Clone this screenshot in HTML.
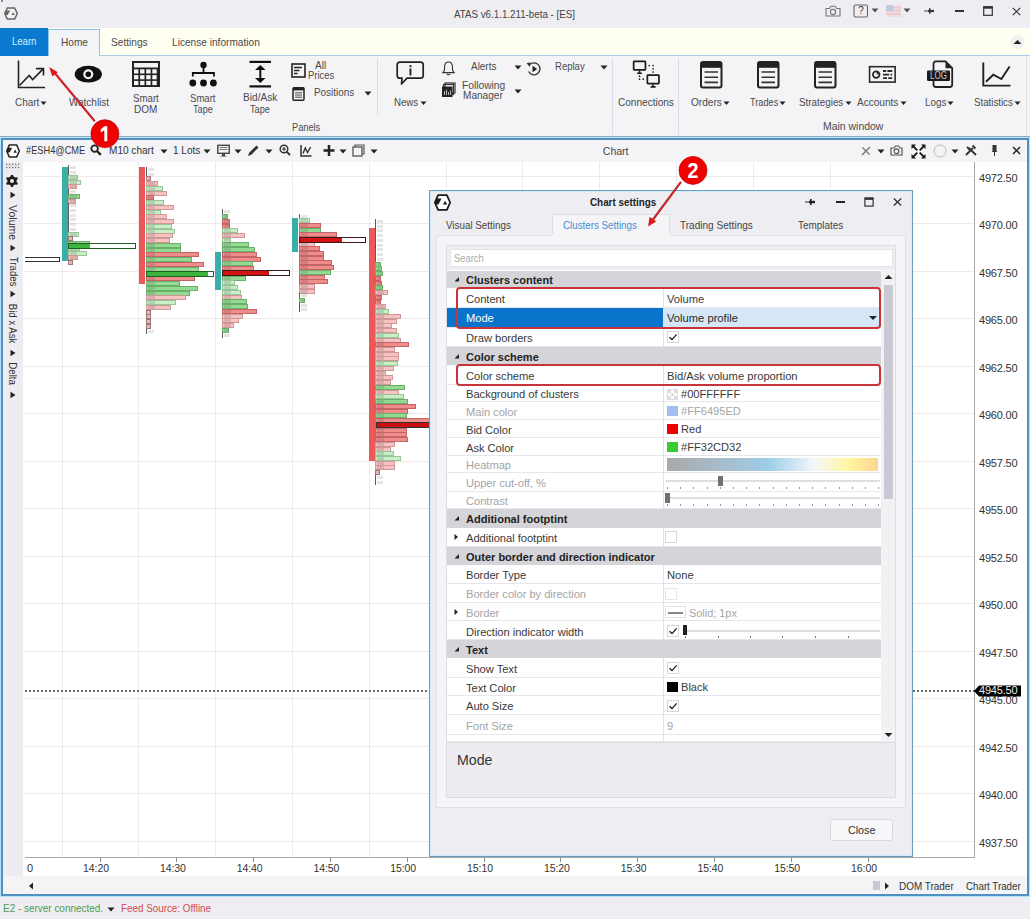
<!DOCTYPE html><html><head><meta charset="utf-8"><style>
html,body{margin:0;padding:0;width:1030px;height:919px;overflow:hidden;background:#EEEEF2;font-family:"Liberation Sans",sans-serif;color:#333;}
.t{position:absolute;white-space:nowrap;}
div,svg{box-sizing:border-box;}
</style></head><body>
<div style="position:absolute;left:0px;top:0px;width:1030px;height:28px;background:#EEEEF2"></div>
<div style="position:absolute;left:0px;top:28px;width:1030px;height:27px;background:#FFFFF2"></div>
<div style="position:absolute;left:0px;top:55px;width:1030px;height:1px;background:#A9CDE8"></div>
<div style="position:absolute;left:0px;top:56px;width:1030px;height:80px;background:#F4F4F7"></div>
<div style="position:absolute;left:1026px;top:56px;width:1px;height:80px;background:#E2E2E8"></div>
<div style="position:absolute;left:0px;top:136px;width:1030px;height:1px;background:#8FAABB"></div>
<div style="position:absolute;left:0px;top:137px;width:1030px;height:760px;background:#B5E2FA"></div>
<div style="position:absolute;left:1px;top:138px;width:1028px;height:758px;border:2px solid #4F91C2;background:#E6F6FE"></div>
<div style="position:absolute;left:3px;top:140px;width:1024px;height:754px;background:#F4F4F7"></div>
<div style="position:absolute;left:23px;top:162px;width:1004px;height:714px;background:#FFFFFF"></div>
<div style="position:absolute;left:0px;top:897px;width:1030px;height:22px;background:#EEEEF2"></div>
<div style="position:absolute;left:25px;top:176px;width:950px;height:1px;background:#F0E9EA"></div>
<div style="position:absolute;left:25px;top:223px;width:950px;height:1px;background:#F0E9EA"></div>
<div style="position:absolute;left:25px;top:271px;width:950px;height:1px;background:#F0E9EA"></div>
<div style="position:absolute;left:25px;top:318px;width:950px;height:1px;background:#F0E9EA"></div>
<div style="position:absolute;left:25px;top:366px;width:950px;height:1px;background:#F0E9EA"></div>
<div style="position:absolute;left:25px;top:413px;width:950px;height:1px;background:#F0E9EA"></div>
<div style="position:absolute;left:25px;top:461px;width:950px;height:1px;background:#F0E9EA"></div>
<div style="position:absolute;left:25px;top:508px;width:950px;height:1px;background:#F0E9EA"></div>
<div style="position:absolute;left:25px;top:556px;width:950px;height:1px;background:#F0E9EA"></div>
<div style="position:absolute;left:25px;top:603px;width:950px;height:1px;background:#F0E9EA"></div>
<div style="position:absolute;left:25px;top:651px;width:950px;height:1px;background:#F0E9EA"></div>
<div style="position:absolute;left:25px;top:698px;width:950px;height:1px;background:#F0E9EA"></div>
<div style="position:absolute;left:25px;top:746px;width:950px;height:1px;background:#F0E9EA"></div>
<div style="position:absolute;left:25px;top:793px;width:950px;height:1px;background:#F0E9EA"></div>
<div style="position:absolute;left:25px;top:841px;width:950px;height:1px;background:#F0E9EA"></div>
<div style="position:absolute;left:62px;top:162px;width:1px;height:696px;background:#F0E9EA"></div>
<div style="position:absolute;left:138px;top:162px;width:1px;height:696px;background:#F0E9EA"></div>
<div style="position:absolute;left:215px;top:162px;width:1px;height:696px;background:#F0E9EA"></div>
<div style="position:absolute;left:292px;top:162px;width:1px;height:696px;background:#F0E9EA"></div>
<div style="position:absolute;left:369px;top:162px;width:1px;height:696px;background:#F0E9EA"></div>
<div style="position:absolute;left:446px;top:162px;width:1px;height:696px;background:#F0E9EA"></div>
<div style="position:absolute;left:522px;top:162px;width:1px;height:696px;background:#F0E9EA"></div>
<div style="position:absolute;left:599px;top:162px;width:1px;height:696px;background:#F0E9EA"></div>
<div style="position:absolute;left:676px;top:162px;width:1px;height:696px;background:#F0E9EA"></div>
<div style="position:absolute;left:753px;top:162px;width:1px;height:696px;background:#F0E9EA"></div>
<div style="position:absolute;left:830px;top:162px;width:1px;height:696px;background:#F0E9EA"></div>
<div style="position:absolute;left:974px;top:162px;width:1px;height:696px;background:#A8A8A8"></div>
<div style="position:absolute;left:25px;top:857px;width:950px;height:1px;background:#A8A8A8"></div>
<div class="t" style="left:979px;top:171.6px;font-size:11px;line-height:13.2px;color:#333;letter-spacing:-0.2px">4972.50</div>
<div class="t" style="left:979px;top:219.12px;font-size:11px;line-height:13.2px;color:#333;letter-spacing:-0.2px">4970.00</div>
<div class="t" style="left:979px;top:266.64px;font-size:11px;line-height:13.2px;color:#333;letter-spacing:-0.2px">4967.50</div>
<div class="t" style="left:979px;top:314.15999999999997px;font-size:11px;line-height:13.2px;color:#333;letter-spacing:-0.2px">4965.00</div>
<div class="t" style="left:979px;top:361.67999999999995px;font-size:11px;line-height:13.2px;color:#333;letter-spacing:-0.2px">4962.50</div>
<div class="t" style="left:979px;top:409.2px;font-size:11px;line-height:13.2px;color:#333;letter-spacing:-0.2px">4960.00</div>
<div class="t" style="left:979px;top:456.71999999999997px;font-size:11px;line-height:13.2px;color:#333;letter-spacing:-0.2px">4957.50</div>
<div class="t" style="left:979px;top:504.24px;font-size:11px;line-height:13.2px;color:#333;letter-spacing:-0.2px">4955.00</div>
<div class="t" style="left:979px;top:551.76px;font-size:11px;line-height:13.2px;color:#333;letter-spacing:-0.2px">4952.50</div>
<div class="t" style="left:979px;top:599.28px;font-size:11px;line-height:13.2px;color:#333;letter-spacing:-0.2px">4950.00</div>
<div class="t" style="left:979px;top:646.8000000000001px;font-size:11px;line-height:13.2px;color:#333;letter-spacing:-0.2px">4947.50</div>
<div class="t" style="left:979px;top:694.32px;font-size:11px;line-height:13.2px;color:#333;letter-spacing:-0.2px">4945.00</div>
<div class="t" style="left:979px;top:741.84px;font-size:11px;line-height:13.2px;color:#333;letter-spacing:-0.2px">4942.50</div>
<div class="t" style="left:979px;top:789.36px;font-size:11px;line-height:13.2px;color:#333;letter-spacing:-0.2px">4940.00</div>
<div class="t" style="left:979px;top:836.88px;font-size:11px;line-height:13.2px;color:#333;letter-spacing:-0.2px">4937.50</div>
<div style="position:absolute;left:100px;top:858px;width:1px;height:4px;background:#888"></div>
<div class="t" style="left:66.0px;top:862.2px;width:60px;text-align:center;font-size:10.5px;line-height:12.6px;color:#333;letter-spacing:-0.1px">14:20</div>
<div style="position:absolute;left:176px;top:858px;width:1px;height:4px;background:#888"></div>
<div class="t" style="left:142.8px;top:862.2px;width:60px;text-align:center;font-size:10.5px;line-height:12.6px;color:#333;letter-spacing:-0.1px">14:30</div>
<div style="position:absolute;left:253px;top:858px;width:1px;height:4px;background:#888"></div>
<div class="t" style="left:219.6px;top:862.2px;width:60px;text-align:center;font-size:10.5px;line-height:12.6px;color:#333;letter-spacing:-0.1px">14:40</div>
<div style="position:absolute;left:330px;top:858px;width:1px;height:4px;background:#888"></div>
<div class="t" style="left:296.4px;top:862.2px;width:60px;text-align:center;font-size:10.5px;line-height:12.6px;color:#333;letter-spacing:-0.1px">14:50</div>
<div style="position:absolute;left:407px;top:858px;width:1px;height:4px;background:#888"></div>
<div class="t" style="left:373.2px;top:862.2px;width:60px;text-align:center;font-size:10.5px;line-height:12.6px;color:#333;letter-spacing:-0.1px">15:00</div>
<div style="position:absolute;left:484px;top:858px;width:1px;height:4px;background:#888"></div>
<div class="t" style="left:450.0px;top:862.2px;width:60px;text-align:center;font-size:10.5px;line-height:12.6px;color:#333;letter-spacing:-0.1px">15:10</div>
<div style="position:absolute;left:560px;top:858px;width:1px;height:4px;background:#888"></div>
<div class="t" style="left:526.8px;top:862.2px;width:60px;text-align:center;font-size:10.5px;line-height:12.6px;color:#333;letter-spacing:-0.1px">15:20</div>
<div style="position:absolute;left:637px;top:858px;width:1px;height:4px;background:#888"></div>
<div class="t" style="left:603.6px;top:862.2px;width:60px;text-align:center;font-size:10.5px;line-height:12.6px;color:#333;letter-spacing:-0.1px">15:30</div>
<div style="position:absolute;left:714px;top:858px;width:1px;height:4px;background:#888"></div>
<div class="t" style="left:680.4px;top:862.2px;width:60px;text-align:center;font-size:10.5px;line-height:12.6px;color:#333;letter-spacing:-0.1px">15:40</div>
<div style="position:absolute;left:791px;top:858px;width:1px;height:4px;background:#888"></div>
<div class="t" style="left:757.1999999999999px;top:862.2px;width:60px;text-align:center;font-size:10.5px;line-height:12.6px;color:#333;letter-spacing:-0.1px">15:50</div>
<div style="position:absolute;left:868px;top:858px;width:1px;height:4px;background:#888"></div>
<div class="t" style="left:834.0px;top:862.2px;width:60px;text-align:center;font-size:10.5px;line-height:12.6px;color:#333;letter-spacing:-0.1px">16:00</div>
<div class="t" style="left:27px;top:861.9px;font-size:11px;line-height:13.2px;color:#333">0</div>
<div style="position:absolute;left:23px;top:876px;width:1004px;height:18px;background:#F4F4F7"></div>
<div style="position:absolute;left:1px;top:0px;width:1.5px;height:2px;background:#888"></div>
<svg style="position:absolute;left:4px;top:7px;" width="14" height="13" viewBox="0 0 14 13"><path d="M3.4 0.9 L10.6 0.9 L13.3 6.5 L10.6 12.1 L3.4 12.1 L0.7 6.5 Z" fill="#F4F4F6" stroke="#666" stroke-width="1.5" stroke-linejoin="round"/><path d="M0.8 6.5 L2.0 3.5 L6.2 3.5 L3.6 8 L1.4 8 Z" fill="#666"/><path d="M7.4 8.1 L9.1 5.2 L10.9 8.1 Z" fill="#666"/></svg>
<div class="t" style="left:454px;top:8.4px;font-size:11px;line-height:13.2px;transform-origin:0 50%;transform:scaleX(0.887);color:#444">ATAS v6.1.1.211-beta - [ES]</div>
<svg style="position:absolute;left:825px;top:5px;" width="16" height="12" viewBox="0 0 16 12"><path d="M1 3.5 L4.5 3.5 L6 1.2 L10 1.2 L11.5 3.5 L15 3.5 L15 11 L1 11 Z" fill="none" stroke="#777" stroke-width="1.1"/><circle cx="8" cy="7" r="2.6" fill="none" stroke="#777" stroke-width="1.1"/></svg>
<svg style="position:absolute;left:853px;top:4px;" width="16" height="14" viewBox="0 0 16 14"><rect x="1" y="1" width="13.5" height="12" rx="1.5" fill="none" stroke="#666" stroke-width="1.1"/></svg>
<div class="t" style="left:855.0px;top:5.0px;width:12px;text-align:center;font-size:10px;line-height:12.0px;color:#444">?</div>
<svg style="position:absolute;left:871px;top:8px;" width="8" height="5" viewBox="0 0 8 5"><path d="M0.5 0.5 L7.5 0.5 L4 4.5 Z" fill="#555"/></svg>
<svg style="position:absolute;left:886px;top:5px;" width="15" height="12" viewBox="0 0 15 12"><g opacity="0.65"><rect x="0" y="0" width="15" height="12" fill="#F3D3D6"/><rect x="0" y="2" width="15" height="1.5" fill="#E8B8BC"/><rect x="0" y="5" width="15" height="1.5" fill="#E8B8BC"/><rect x="0" y="8" width="15" height="1.5" fill="#E8B8BC"/><rect x="0" y="0" width="7" height="6" fill="#A9B8D6"/></g></svg>
<svg style="position:absolute;left:903px;top:8px;" width="8" height="5" viewBox="0 0 8 5"><path d="M0.5 0.5 L7.5 0.5 L4 4.5 Z" fill="#555"/></svg>
<svg style="position:absolute;left:924px;top:7px;" width="11" height="8" viewBox="0 0 11 8"><path d="M0 4 L4 4" stroke="#444" stroke-width="1"/><path d="M4 2.9 L10 2.9 L10 5.1 L4 5.1 Z" fill="#333"/><rect x="5" y="1.2" width="1.5" height="5.6" fill="#333"/></svg>
<div style="position:absolute;left:955px;top:10px;width:9px;height:2.2px;background:#333"></div>
<svg style="position:absolute;left:983px;top:6px;" width="10" height="10" viewBox="0 0 10 10"><rect x="0.7" y="0.7" width="8.6" height="8.6" fill="none" stroke="#333" stroke-width="1.2"/><rect x="0.7" y="0.7" width="8.6" height="2" fill="#333"/></svg>
<svg style="position:absolute;left:1012px;top:7px;" width="9" height="9" viewBox="0 0 9 9"><path d="M0.8 0.8 L8.2 8.2 M8.2 0.8 L0.8 8.2" stroke="#333" stroke-width="1.2"/></svg>
<div style="position:absolute;left:0px;top:28px;width:48px;height:28px;background:#0B79CF"></div>
<div class="t" style="left:12.3px;top:34.6px;font-size:11.5px;line-height:13.799999999999999px;transform-origin:0 50%;transform:scaleX(0.830);color:#D2F0FF">Learn</div>
<div style="position:absolute;left:48px;top:29px;width:52px;height:27px;background:#F4F4F7;border:1px solid #8EC0E4;border-bottom:none"></div>
<div class="t" style="left:60.8px;top:36.199999999999996px;font-size:11px;line-height:13.2px;transform-origin:0 50%;transform:scaleX(0.920);color:#4A4A4A">Home</div>
<div class="t" style="left:111.4px;top:36.199999999999996px;font-size:11px;line-height:13.2px;transform-origin:0 50%;transform:scaleX(0.923);color:#4A4A4A">Settings</div>
<div class="t" style="left:171.7px;top:36.199999999999996px;font-size:11px;line-height:13.2px;transform-origin:0 50%;transform:scaleX(0.920);color:#4A4A4A">License information</div>
<svg style="position:absolute;left:1010px;top:35px;" width="15" height="14" viewBox="0 0 15 14"><circle cx="7.5" cy="7" r="7" fill="#F0F0EE"/><path d="M3.5 9 L11.5 9 L7.5 5 Z" fill="#222"/></svg>
<svg style="position:absolute;left:17px;top:60px;" width="29" height="29" viewBox="0 0 29 29"><path d="M1.5 0.5 L1.5 27.5 L28 27.5" fill="none" stroke="#222" stroke-width="1.6"/><path d="M2.5 25.5 L12.2 15.4 L15.6 19.5 L26.5 8.6" fill="none" stroke="#222" stroke-width="1.6"/><path d="M19 8.6 L26.5 8.6 L26.5 15.4" fill="none" stroke="#222" stroke-width="1.6"/></svg>
<div class="t" style="left:15px;top:96.0px;font-size:11px;line-height:13.2px;transform-origin:0 50%;transform:scaleX(0.900);color:#4A4A4A">Chart</div>
<svg style="position:absolute;left:40.2px;top:101px;" width="7" height="5" viewBox="0 0 7 5"><path d="M0.5 0.5 L6.5 0.5 L3.5 4 Z" fill="#222"/></svg>
<svg style="position:absolute;left:74px;top:65px;" width="29" height="19" viewBox="0 0 29 19"><ellipse cx="14.3" cy="9.2" rx="13.6" ry="8.4" fill="#111"/><circle cx="14.3" cy="9.2" r="5" fill="#F4F4F7"/><circle cx="14.3" cy="9.2" r="2.8" fill="#111"/></svg>
<div class="t" style="left:68.6px;top:96.0px;font-size:11px;line-height:13.2px;transform-origin:0 50%;transform:scaleX(0.907);color:#4A4A4A">Watchlist</div>
<svg style="position:absolute;left:132px;top:61px;" width="28" height="26" viewBox="0 0 28 26"><rect x="0" y="0" width="28" height="26" fill="#222"/><rect x="2" y="2" width="24" height="4.5" fill="#F4F4F7"/><rect x="2.0" y="8.3" width="4.4" height="4.2" fill="#F4F4F7"/><rect x="8.1" y="8.3" width="4.4" height="4.2" fill="#F4F4F7"/><rect x="14.2" y="8.3" width="4.4" height="4.2" fill="#F4F4F7"/><rect x="20.3" y="8.3" width="4.4" height="4.2" fill="#F4F4F7"/><rect x="2.0" y="14.1" width="4.4" height="4.2" fill="#F4F4F7"/><rect x="8.1" y="14.1" width="4.4" height="4.2" fill="#F4F4F7"/><rect x="14.2" y="14.1" width="4.4" height="4.2" fill="#F4F4F7"/><rect x="20.3" y="14.1" width="4.4" height="4.2" fill="#F4F4F7"/><rect x="2.0" y="19.9" width="4.4" height="4.2" fill="#F4F4F7"/><rect x="8.1" y="19.9" width="4.4" height="4.2" fill="#F4F4F7"/><rect x="14.2" y="19.9" width="4.4" height="4.2" fill="#F4F4F7"/><rect x="20.3" y="19.9" width="4.4" height="4.2" fill="#F4F4F7"/></svg>
<div class="t" style="left:132.6px;top:91.5px;font-size:11px;line-height:13.2px;transform-origin:0 50%;transform:scaleX(0.879);color:#4A4A4A">Smart</div>
<div class="t" style="left:133.8px;top:102.80000000000001px;font-size:11px;line-height:13.2px;transform-origin:0 50%;transform:scaleX(0.908);color:#4A4A4A">DOM</div>
<svg style="position:absolute;left:189px;top:61px;" width="29" height="26" viewBox="0 0 29 26"><circle cx="14.5" cy="4" r="3.2" fill="#111"/><path d="M14.5 6 L14.5 12.5 M3.8 15.5 L3.8 12 L25 12 L25 15.5" fill="none" stroke="#111" stroke-width="1.8"/><circle cx="3.8" cy="22" r="3.4" fill="#111"/><circle cx="14.5" cy="22" r="3.4" fill="#111"/><circle cx="24.4" cy="22" r="3.4" fill="#111"/></svg>
<div class="t" style="left:190px;top:91.5px;font-size:11px;line-height:13.2px;transform-origin:0 50%;transform:scaleX(0.869);color:#4A4A4A">Smart</div>
<div class="t" style="left:193.4px;top:102.80000000000001px;font-size:11px;line-height:13.2px;transform-origin:0 50%;transform:scaleX(0.830);color:#4A4A4A">Tape</div>
<svg style="position:absolute;left:249px;top:60px;" width="23" height="28" viewBox="0 0 23 28"><rect x="0.5" y="0.8" width="21.5" height="2.2" fill="#111"/><rect x="0.5" y="25.3" width="21.5" height="2.2" fill="#111"/><path d="M11.3 7 L11.3 21" stroke="#111" stroke-width="2"/><path d="M6 10 L11.3 5 L16.6 10 Z M6 18 L11.3 23 L16.6 18 Z" fill="#111"/></svg>
<div class="t" style="left:242.7px;top:91.4px;font-size:11px;line-height:13.2px;transform-origin:0 50%;transform:scaleX(0.920);color:#4A4A4A">Bid/Ask</div>
<div class="t" style="left:250.2px;top:102.80000000000001px;font-size:11px;line-height:13.2px;transform-origin:0 50%;transform:scaleX(0.830);color:#4A4A4A">Tape</div>
<svg style="position:absolute;left:291px;top:63px;" width="15" height="15" viewBox="0 0 15 15"><rect x="1" y="1" width="13" height="13" fill="none" stroke="#222" stroke-width="1.6"/><path d="M3 4.5 L11 4.5 M3 7.5 L8.5 7.5 M3 10.5 L6.5 10.5" stroke="#222" stroke-width="1.4"/></svg>
<div class="t" style="left:315.2px;top:58.99999999999999px;font-size:11px;line-height:13.2px;transform-origin:0 50%;transform:scaleX(0.924);color:#4A4A4A">All</div>
<div class="t" style="left:308.2px;top:68.9px;font-size:11px;line-height:13.2px;transform-origin:0 50%;transform:scaleX(0.854);color:#4A4A4A">Prices</div>
<svg style="position:absolute;left:292px;top:87px;" width="13" height="14" viewBox="0 0 13 14"><rect x="1" y="0.8" width="11" height="12.4" rx="1" fill="none" stroke="#222" stroke-width="1.5"/><rect x="1" y="0.8" width="11" height="2.6" fill="#222"/><path d="M3 5.8 L10 5.8 M3 8 L10 8 M3 10.2 L10 10.2" stroke="#444" stroke-width="1"/></svg>
<div class="t" style="left:313.8px;top:86.10000000000001px;font-size:11px;line-height:13.2px;transform-origin:0 50%;transform:scaleX(0.901);color:#4A4A4A">Positions</div>
<svg style="position:absolute;left:364px;top:91px;" width="8" height="5" viewBox="0 0 8 5"><path d="M0.5 0.5 L7.5 0.5 L4 4.5 Z" fill="#222"/></svg>
<div class="t" style="left:292px;top:120.5px;font-size:11px;line-height:13.2px;transform-origin:0 50%;transform:scaleX(0.838);color:#4A4A4A">Panels</div>
<div style="position:absolute;left:377px;top:58px;width:1px;height:57px;background:#DCDCE2"></div>
<svg style="position:absolute;left:396px;top:61px;" width="29" height="25" viewBox="0 0 29 25"><path d="M4 1.2 L24.5 1.2 Q27.2 1.2 27.2 4 L27.2 14.5 Q27.2 17.2 24.5 17.2 L11 17.2 L5.5 23 L6 17.2 L4 17.2 Q1.2 17.2 1.2 14.5 L1.2 4 Q1.2 1.2 4 1.2 Z" fill="none" stroke="#222" stroke-width="1.7" stroke-linejoin="round"/><rect x="13.5" y="7.5" width="1.9" height="7" fill="#222"/><rect x="13.5" y="4.2" width="1.9" height="2" fill="#222"/></svg>
<div class="t" style="left:394.3px;top:96.0px;font-size:11px;line-height:13.2px;transform-origin:0 50%;transform:scaleX(0.880);color:#4A4A4A">News</div>
<svg style="position:absolute;left:419.5px;top:101px;" width="7" height="5" viewBox="0 0 7 5"><path d="M0.5 0.5 L6.5 0.5 L3.5 4 Z" fill="#222"/></svg>
<svg style="position:absolute;left:442px;top:61px;" width="13" height="15" viewBox="0 0 13 15"><path d="M6.5 1 Q2.8 1 2.6 5.5 L2.4 9.5 L0.8 11.6 L12.2 11.6 L10.6 9.5 L10.4 5.5 Q10.2 1 6.5 1 Z" fill="none" stroke="#333" stroke-width="1.1"/><path d="M4.8 12.8 Q6.5 14.6 8.2 12.8" fill="none" stroke="#333" stroke-width="1.1"/></svg>
<div class="t" style="left:470.8px;top:59.99999999999999px;font-size:11px;line-height:13.2px;transform-origin:0 50%;transform:scaleX(0.903);color:#4A4A4A">Alerts</div>
<svg style="position:absolute;left:514px;top:65px;" width="8" height="5" viewBox="0 0 8 5"><path d="M0.5 0.5 L7.5 0.5 L4 4.5 Z" fill="#222"/></svg>
<svg style="position:absolute;left:441px;top:82px;" width="15" height="16" viewBox="0 0 15 16"><rect x="4" y="1" width="10" height="10" fill="none" stroke="#333" stroke-width="1.2"/><rect x="2.5" y="2.5" width="10" height="10" fill="none" stroke="#333" stroke-width="1.2"/><rect x="1" y="4.5" width="10.5" height="10.5" fill="#222"/><path d="M3.5 13 L3.5 9 M5.5 13 L5.5 7.5 M7.5 13 L7.5 10 M9.5 13 L9.5 8.5" stroke="#ccc" stroke-width="0.9"/></svg>
<div class="t" style="left:461.6px;top:79.0px;font-size:11px;line-height:13.2px;transform-origin:0 50%;transform:scaleX(0.930);color:#4A4A4A">Following</div>
<div class="t" style="left:463.2px;top:89.0px;font-size:11px;line-height:13.2px;transform-origin:0 50%;transform:scaleX(0.917);color:#4A4A4A">Manager</div>
<svg style="position:absolute;left:514px;top:89px;" width="8" height="5" viewBox="0 0 8 5"><path d="M0.5 0.5 L7.5 0.5 L4 4.5 Z" fill="#222"/></svg>
<svg style="position:absolute;left:526px;top:61px;" width="16" height="16" viewBox="0 0 16 16"><path d="M3.2 4.2 A6 6 0 1 1 2.6 10.5" fill="none" stroke="#333" stroke-width="1.3"/><path d="M0.5 2 L4.5 1.5 L3.8 6 Z" fill="#333"/><path d="M6.5 4.8 L11.2 8 L6.5 11.2 Z" fill="#222"/></svg>
<div class="t" style="left:554.6px;top:60.300000000000004px;font-size:11px;line-height:13.2px;transform-origin:0 50%;transform:scaleX(0.867);color:#4A4A4A">Replay</div>
<svg style="position:absolute;left:600px;top:65px;" width="8" height="5" viewBox="0 0 8 5"><path d="M0.5 0.5 L7.5 0.5 L4 4.5 Z" fill="#222"/></svg>
<div style="position:absolute;left:612px;top:58px;width:1px;height:77px;background:#DCDCE2"></div>
<svg style="position:absolute;left:632px;top:60px;" width="29" height="29" viewBox="0 0 29 29"><rect x="1.65" y="1.35" width="11.8" height="8.5" rx="0.6" fill="none" stroke="#1a1a1a" stroke-width="1.7"/><path d="M7.5 10.5 L7.5 13" stroke="#1a1a1a" stroke-width="1.5"/><rect x="5" y="12.5" width="5" height="1.6" rx="0.5" fill="#1a1a1a"/><rect x="15.35" y="15.05" width="11.6" height="8.5" rx="0.6" fill="none" stroke="#1a1a1a" stroke-width="1.7"/><path d="M21 24.2 L21 26.5" stroke="#1a1a1a" stroke-width="1.5"/><rect x="18.5" y="26" width="5.2" height="1.7" rx="0.5" fill="#1a1a1a"/><circle cx="17.2" cy="5.6" r="0.85" fill="#222"/><circle cx="21.1" cy="5.6" r="0.85" fill="#222"/><circle cx="21.1" cy="8.8" r="0.85" fill="#222"/><circle cx="21.1" cy="12" r="0.85" fill="#222"/><circle cx="7.5" cy="16.2" r="0.85" fill="#222"/><circle cx="7.5" cy="19.2" r="0.85" fill="#222"/><circle cx="11.2" cy="19.2" r="0.85" fill="#222"/></svg>
<div class="t" style="left:618.4px;top:96.0px;font-size:11px;line-height:13.2px;transform-origin:0 50%;transform:scaleX(0.914);color:#4A4A4A">Connections</div>
<div style="position:absolute;left:678px;top:58px;width:1px;height:77px;background:#DCDCE2"></div>
<svg style="position:absolute;left:699.5px;top:61px;" width="23" height="28" viewBox="0 0 23 28"><rect x="1" y="1" width="20.5" height="25.5" rx="2" fill="none" stroke="#222" stroke-width="2"/><rect x="1" y="1" width="20.5" height="5.8" fill="#222"/><path d="M4.5 11 L18 11 M4.5 16.2 L18 16.2 M4.5 21.4 L18 21.4" stroke="#333" stroke-width="1.6"/></svg>
<div class="t" style="left:691.4px;top:96.0px;font-size:11px;line-height:13.2px;transform-origin:0 50%;transform:scaleX(0.919);color:#4A4A4A">Orders</div>
<svg style="position:absolute;left:723.3px;top:101px;" width="7" height="5" viewBox="0 0 7 5"><path d="M0.5 0.5 L6.5 0.5 L3.5 4 Z" fill="#222"/></svg>
<svg style="position:absolute;left:756.9px;top:61px;" width="23" height="28" viewBox="0 0 23 28"><rect x="1" y="1" width="20.5" height="25.5" rx="2" fill="none" stroke="#222" stroke-width="2"/><rect x="1" y="1" width="20.5" height="5.8" fill="#222"/><path d="M4.5 11 L18 11 M4.5 16.2 L18 16.2 M4.5 21.4 L18 21.4" stroke="#333" stroke-width="1.6"/></svg>
<div class="t" style="left:749.6px;top:96.0px;font-size:11px;line-height:13.2px;transform-origin:0 50%;transform:scaleX(0.837);color:#4A4A4A">Trades</div>
<svg style="position:absolute;left:778.9px;top:101px;" width="7" height="5" viewBox="0 0 7 5"><path d="M0.5 0.5 L6.5 0.5 L3.5 4 Z" fill="#222"/></svg>
<svg style="position:absolute;left:814.3px;top:61px;" width="23" height="28" viewBox="0 0 23 28"><rect x="1" y="1" width="20.5" height="25.5" rx="2" fill="none" stroke="#222" stroke-width="2"/><rect x="1" y="1" width="20.5" height="5.8" fill="#222"/><path d="M4.5 11 L18 11 M4.5 16.2 L18 16.2 M4.5 21.4 L18 21.4" stroke="#333" stroke-width="1.6"/></svg>
<div class="t" style="left:799.2px;top:96.0px;font-size:11px;line-height:13.2px;transform-origin:0 50%;transform:scaleX(0.894);color:#4A4A4A">Strategies</div>
<svg style="position:absolute;left:844.5px;top:101px;" width="7" height="5" viewBox="0 0 7 5"><path d="M0.5 0.5 L6.5 0.5 L3.5 4 Z" fill="#222"/></svg>
<svg style="position:absolute;left:868px;top:65px;" width="29" height="19" viewBox="0 0 29 19"><rect x="1.55" y="1.7" width="25.6" height="15.4" fill="none" stroke="#2a2a2a" stroke-width="1.6"/><circle cx="8.2" cy="9.6" r="3.3" fill="none" stroke="#222" stroke-width="1.7"/><path d="M8.6 9.2 L8.6 6.9 A2.4 2.4 0 0 1 10.9 9.2 Z" fill="#222"/><path d="M15 6 L18.2 6 M19.4 6 L24.2 6 M15 9.6 L21.2 9.6 M22.5 9.6 L24.2 9.6 M15 13.1 L19 13.1 M20.2 13.1 L24.2 13.1" stroke="#2a2a2a" stroke-width="1.8"/></svg>
<div class="t" style="left:857.3px;top:96.0px;font-size:11px;line-height:13.2px;transform-origin:0 50%;transform:scaleX(0.913);color:#4A4A4A">Accounts</div>
<svg style="position:absolute;left:899.6px;top:101px;" width="7" height="5" viewBox="0 0 7 5"><path d="M0.5 0.5 L6.5 0.5 L3.5 4 Z" fill="#222"/></svg>
<svg style="position:absolute;left:926px;top:60px;" width="29" height="29" viewBox="0 0 29 29"><path d="M10 1.4 L19.5 1.4 L26.2 8.2 L26.2 24.5 Q26.2 27 23.7 27 L10 27 Q7.5 27 7.5 24.5 L7.5 3.9 Q7.5 1.4 10 1.4 Z" fill="none" stroke="#222" stroke-width="1.8"/><path d="M19.5 1.4 L26.2 8.2 L19.5 8.2 Z" fill="#222"/><rect x="1" y="10.4" width="23" height="10.5" rx="1.2" fill="#1a1a1a"/></svg>
<div class="t" style="left:930px;top:70.2px;font-size:10px;line-height:12.0px;transform-origin:0 50%;transform:scaleX(0.805);color:#CCCCCC">LOG</div>
<div class="t" style="left:924.8px;top:96.0px;font-size:11px;line-height:13.2px;transform-origin:0 50%;transform:scaleX(0.893);color:#4A4A4A">Logs</div>
<svg style="position:absolute;left:947.1px;top:101px;" width="7" height="5" viewBox="0 0 7 5"><path d="M0.5 0.5 L6.5 0.5 L3.5 4 Z" fill="#222"/></svg>
<svg style="position:absolute;left:982px;top:62px;" width="29" height="25" viewBox="0 0 29 25"><path d="M1.3 0.5 L1.3 23.6 L28.5 23.6" fill="none" stroke="#222" stroke-width="1.9"/><path d="M4 19.8 L11.3 12.7 L19.4 17.1 L27.6 4.5" fill="none" stroke="#222" stroke-width="1.9"/></svg>
<div class="t" style="left:973.8px;top:96.0px;font-size:11px;line-height:13.2px;transform-origin:0 50%;transform:scaleX(0.882);color:#4A4A4A">Statistics</div>
<svg style="position:absolute;left:1013.6px;top:101px;" width="7" height="5" viewBox="0 0 7 5"><path d="M0.5 0.5 L6.5 0.5 L3.5 4 Z" fill="#222"/></svg>
<div class="t" style="left:822.5px;top:120.2px;font-size:11px;line-height:13.2px;transform-origin:0 50%;transform:scaleX(0.950);color:#4A4A4A">Main window</div>
<div class="t" style="left:3px;top:902.4px;font-size:11px;line-height:13.2px;transform-origin:0 50%;transform:scaleX(0.904);color:#4E9B4E">E2 - server connected.</div>
<svg style="position:absolute;left:107px;top:907px;" width="8" height="5" viewBox="0 0 8 5"><path d="M0.5 0.5 L7.5 0.5 L4 4.5 Z" fill="#222"/></svg>
<div class="t" style="left:121px;top:902.4px;font-size:11px;line-height:13.2px;transform-origin:0 50%;transform:scaleX(0.894);color:#D24C4C">Feed Source: Offline</div>
<svg style="position:absolute;left:6px;top:144px;" width="14" height="14" viewBox="0 0 14 14"><g transform="scale(1.0)"><path d="M3.4 0.9 L10.6 0.9 L13.3 7 L10.6 13.1 L3.4 13.1 L0.7 7 Z" fill="#fff" stroke="#222" stroke-width="1.5" stroke-linejoin="round"/><path d="M0.8 7 L2.0 3.7 L6.2 3.7 L3.6 8.6 L1.4 8.6 Z" fill="#222"/><path d="M7.4 8.7 L9.1 5.6 L10.9 8.7 Z" fill="#222"/></g></svg>
<div class="t" style="left:26.2px;top:144.20000000000002px;font-size:11px;line-height:13.2px;transform-origin:0 50%;transform:scaleX(0.840);color:#333">#ESH4@CME</div>
<svg style="position:absolute;left:90px;top:144px;" width="12" height="13" viewBox="0 0 12 13"><circle cx="4.6" cy="4.6" r="3.3" fill="none" stroke="#222" stroke-width="1.8"/><path d="M7 7 L10.8 10.8" stroke="#222" stroke-width="2.4"/></svg>
<div class="t" style="left:108.7px;top:144.20000000000002px;font-size:11px;line-height:13.2px;transform-origin:0 50%;transform:scaleX(0.914);color:#333">M10 chart</div>
<svg style="position:absolute;left:159.5px;top:148.5px;" width="8" height="5" viewBox="0 0 8 5"><path d="M0.5 0.5 L7.5 0.5 L4 4.5 Z" fill="#222"/></svg>
<div class="t" style="left:172.8px;top:144.20000000000002px;font-size:11px;line-height:13.2px;transform-origin:0 50%;transform:scaleX(0.908);color:#333">1 Lots</div>
<svg style="position:absolute;left:203px;top:148.5px;" width="8" height="5" viewBox="0 0 8 5"><path d="M0.5 0.5 L7.5 0.5 L4 4.5 Z" fill="#222"/></svg>
<svg style="position:absolute;left:217px;top:144px;" width="13" height="13" viewBox="0 0 13 13"><rect x="0.8" y="1.3" width="11.4" height="8" fill="none" stroke="#444" stroke-width="1.4"/><rect x="2.5" y="3" width="8" height="1" fill="#777"/><rect x="2.5" y="5" width="8" height="1" fill="#777"/><path d="M5 10 L8 10 L8 11.5 L10 12.5 L3 12.5 L5 11.5Z" fill="#444"/></svg>
<svg style="position:absolute;left:234px;top:148.5px;" width="8" height="5" viewBox="0 0 8 5"><path d="M0.5 0.5 L7.5 0.5 L4 4.5 Z" fill="#222"/></svg>
<svg style="position:absolute;left:247px;top:144px;" width="13" height="13" viewBox="0 0 13 13"><path d="M1.5 11.5 L2.3 8.6 L9.4 1.5 L11.5 3.6 L4.4 10.7 Z" fill="#333"/><path d="M1.2 11.8 L2 9.6 L3.4 11 Z" fill="#333"/></svg>
<svg style="position:absolute;left:264.5px;top:148.5px;" width="8" height="5" viewBox="0 0 8 5"><path d="M0.5 0.5 L7.5 0.5 L4 4.5 Z" fill="#222"/></svg>
<svg style="position:absolute;left:279px;top:144px;" width="12" height="13" viewBox="0 0 12 13"><circle cx="5" cy="5" r="3.8" fill="none" stroke="#333" stroke-width="1.5"/><path d="M3 5 L7 5 M5 3 L5 7" stroke="#333" stroke-width="1.1"/><path d="M7.6 7.6 L11 11" stroke="#333" stroke-width="1.9"/></svg>
<svg style="position:absolute;left:300px;top:144px;" width="12" height="13" viewBox="0 0 12 13"><path d="M1 1 L1 12 L11.5 12" fill="none" stroke="#333" stroke-width="1.5"/><path d="M3 9.5 L5.3 4 L7.5 8.5 L10.6 3" fill="none" stroke="#333" stroke-width="1.4"/></svg>
<svg style="position:absolute;left:323px;top:144px;" width="12" height="13" viewBox="0 0 12 13"><path d="M6 1 L6 12 M0.5 6.5 L11.5 6.5" stroke="#222" stroke-width="2.5"/></svg>
<svg style="position:absolute;left:339px;top:148.5px;" width="8" height="5" viewBox="0 0 8 5"><path d="M0.5 0.5 L7.5 0.5 L4 4.5 Z" fill="#222"/></svg>
<svg style="position:absolute;left:352px;top:144px;" width="13" height="13" viewBox="0 0 13 13"><rect x="1" y="3" width="9" height="9" fill="none" stroke="#555" stroke-width="1.3"/><path d="M3 3 L3 1 L12 1 L12 10 L10 10" fill="none" stroke="#555" stroke-width="1.2"/></svg>
<svg style="position:absolute;left:369.5px;top:148.5px;" width="8" height="5" viewBox="0 0 8 5"><path d="M0.5 0.5 L7.5 0.5 L4 4.5 Z" fill="#222"/></svg>
<div class="t" style="left:585.7px;top:144.7px;width:60px;text-align:center;font-size:10.5px;line-height:12.6px;color:#444">Chart</div>
<svg style="position:absolute;left:861px;top:146px;" width="10" height="10" viewBox="0 0 10 10"><path d="M1 9 L9 1 M1.5 1.5 L8.5 8.5" stroke="#6A6A6A" stroke-width="1.1"/><path d="M3 3.6 L5.6 3.6 L5.6 6.2 Z" fill="#888"/></svg>
<svg style="position:absolute;left:877px;top:148.5px;" width="8" height="5" viewBox="0 0 8 5"><path d="M0.5 0.5 L7.5 0.5 L4 4.5 Z" fill="#222"/></svg>
<svg style="position:absolute;left:890px;top:144px;" width="13" height="13" viewBox="0 0 13 13"><path d="M1 4 L4 4 L5.5 2 L8.5 2 L10 4 L12 4 L12 11 L1 11 Z" fill="none" stroke="#555" stroke-width="1.2"/><circle cx="6.5" cy="7.2" r="2.3" fill="none" stroke="#555" stroke-width="1.2"/></svg>
<svg style="position:absolute;left:911px;top:143.5px;" width="15" height="15" viewBox="0 0 15 15"><path d="M6.3 6.3 L2 2 M8.7 6.3 L13 2 M6.3 8.7 L2 13 M8.7 8.7 L13 13" stroke="#1a1a1a" stroke-width="1.8"/><path d="M0.5 0.5 L5 0.5 L0.5 5Z M14.5 0.5 L10 0.5 L14.5 5Z M0.5 14.5 L5 14.5 L0.5 10Z M14.5 14.5 L10 14.5 L14.5 10Z" fill="#1a1a1a"/></svg>
<svg style="position:absolute;left:933px;top:143.5px;" width="14" height="14" viewBox="0 0 14 14"><circle cx="7" cy="7" r="6" fill="none" stroke="#BBB" stroke-width="1"/></svg>
<svg style="position:absolute;left:951px;top:148.5px;" width="8" height="5" viewBox="0 0 8 5"><path d="M0.5 0.5 L7.5 0.5 L4 4.5 Z" fill="#222"/></svg>
<svg style="position:absolute;left:965px;top:144px;" width="12" height="13" viewBox="0 0 12 13"><path d="M1 11 L8 4 M4 4 L11 11 M7.5 1.5 L10.5 4.5 M2 3 L5 6" stroke="#333" stroke-width="1.8"/></svg>
<svg style="position:absolute;left:991px;top:144px;" width="7" height="13" viewBox="0 0 7 13"><path d="M1.5 1 L5.5 1 L5.5 7 L6.5 8 L0.5 8 L1.5 7 Z" fill="#333"/><path d="M3.5 8 L3.5 12" stroke="#333" stroke-width="1"/></svg>
<svg style="position:absolute;left:1012px;top:146px;" width="9" height="9" viewBox="0 0 9 9"><path d="M1 1 L8 8 M8 1 L1 8" stroke="#222" stroke-width="1.5"/></svg>
<div style="position:absolute;left:3px;top:162px;width:20px;height:714px;background:#EDEDF1"></div>
<svg style="position:absolute;left:5px;top:163px;" width="17" height="7" viewBox="0 0 17 7"><rect x="1" y="0.6" width="1.2" height="1.2" fill="#666"/><rect x="1" y="4" width="1.2" height="1.2" fill="#666"/><rect x="4" y="0.6" width="1.2" height="1.2" fill="#666"/><rect x="4" y="4" width="1.2" height="1.2" fill="#666"/><rect x="7" y="0.6" width="1.2" height="1.2" fill="#666"/><rect x="7" y="4" width="1.2" height="1.2" fill="#666"/><rect x="10" y="0.6" width="1.2" height="1.2" fill="#666"/><rect x="10" y="4" width="1.2" height="1.2" fill="#666"/><rect x="13" y="0.6" width="1.2" height="1.2" fill="#666"/><rect x="13" y="4" width="1.2" height="1.2" fill="#666"/><rect x="2.5" y="2.3" width="1" height="1" fill="#AAA"/><rect x="5.5" y="2.3" width="1" height="1" fill="#AAA"/><rect x="8.5" y="2.3" width="1" height="1" fill="#AAA"/><rect x="11.5" y="2.3" width="1" height="1" fill="#AAA"/></svg>
<svg style="position:absolute;left:5.5px;top:174.7px;" width="12" height="12" viewBox="0 0 12 12"><g transform="translate(6,6)"><circle r="3.4" fill="none" stroke="#1a1a1a" stroke-width="2.6"/><path d="M0 -5.2 L0 5.2 M-4.5 -2.6 L4.5 2.6 M-4.5 2.6 L4.5 -2.6" stroke="#1a1a1a" stroke-width="2.4" stroke-linecap="round"/><circle r="2" fill="#EDEDF1"/></g></svg>
<svg style="position:absolute;left:9px;top:191px;" width="8" height="8" viewBox="0 0 8 8"><path d="M1.5 0.8 L6.5 4 L1.5 7.2 Z" fill="#222"/></svg>
<svg style="position:absolute;left:9px;top:244px;" width="8" height="8" viewBox="0 0 8 8"><path d="M1.5 0.8 L6.5 4 L1.5 7.2 Z" fill="#222"/></svg>
<svg style="position:absolute;left:9px;top:290px;" width="8" height="8" viewBox="0 0 8 8"><path d="M1.5 0.8 L6.5 4 L1.5 7.2 Z" fill="#222"/></svg>
<svg style="position:absolute;left:9px;top:349px;" width="8" height="8" viewBox="0 0 8 8"><path d="M1.5 0.8 L6.5 4 L1.5 7.2 Z" fill="#222"/></svg>
<svg style="position:absolute;left:9px;top:391px;" width="8" height="8" viewBox="0 0 8 8"><path d="M1.5 0.8 L6.5 4 L1.5 7.2 Z" fill="#222"/></svg>
<div class="t" style="left:-5.845937500000002px;top:215.9px;width:36.691875px;text-align:center;font-size:11px;line-height:13.2px;color:#333;transform:rotate(90deg) scaleX(0.954);">Volume</div>
<div class="t" style="left:-4.41421875px;top:265.15px;width:33.8284375px;text-align:center;font-size:11px;line-height:13.2px;color:#333;transform:rotate(90deg) scaleX(0.872);">Trades</div>
<div class="t" style="left:-10.1208984375px;top:317.2px;width:45.241796875px;text-align:center;font-size:11px;line-height:13.2px;color:#333;transform:rotate(90deg) scaleX(0.875);">Bid x Ask</div>
<div class="t" style="left:-0.33992187499999993px;top:367.44999999999993px;width:25.67984375px;text-align:center;font-size:11px;line-height:13.2px;color:#333;transform:rotate(90deg) scaleX(0.884);">Delta</div>
<div style="position:absolute;left:873px;top:881px;width:7px;height:9px;background:#C8C8D2"></div>
<svg style="position:absolute;left:884px;top:882px;" width="6" height="8" viewBox="0 0 6 8"><path d="M1 0.5 L5 4 L1 7.5 Z" fill="#222"/></svg>
<div class="t" style="left:898.6px;top:879.6px;font-size:11px;line-height:13.2px;transform-origin:0 50%;transform:scaleX(0.904);color:#333">DOM Trader</div>
<div class="t" style="left:965.5px;top:879.6px;font-size:11px;line-height:13.2px;transform-origin:0 50%;transform:scaleX(0.886);color:#333">Chart Trader</div>
<svg style="position:absolute;left:28px;top:882px;" width="6" height="8" viewBox="0 0 6 8"><path d="M5 0.5 L1 4 L5 7.5 Z" fill="#222"/></svg>
<div style="position:absolute;left:25px;top:690px;width:2px;height:2px;background:#6A6A6A"></div>
<div style="position:absolute;left:29px;top:690px;width:2px;height:2px;background:#6A6A6A"></div>
<div style="position:absolute;left:33px;top:690px;width:2px;height:2px;background:#6A6A6A"></div>
<div style="position:absolute;left:37px;top:690px;width:2px;height:2px;background:#6A6A6A"></div>
<div style="position:absolute;left:41px;top:690px;width:2px;height:2px;background:#6A6A6A"></div>
<div style="position:absolute;left:45px;top:690px;width:2px;height:2px;background:#6A6A6A"></div>
<div style="position:absolute;left:49px;top:690px;width:2px;height:2px;background:#6A6A6A"></div>
<div style="position:absolute;left:53px;top:690px;width:2px;height:2px;background:#6A6A6A"></div>
<div style="position:absolute;left:57px;top:690px;width:2px;height:2px;background:#6A6A6A"></div>
<div style="position:absolute;left:61px;top:690px;width:2px;height:2px;background:#6A6A6A"></div>
<div style="position:absolute;left:65px;top:690px;width:2px;height:2px;background:#6A6A6A"></div>
<div style="position:absolute;left:69px;top:690px;width:2px;height:2px;background:#6A6A6A"></div>
<div style="position:absolute;left:73px;top:690px;width:2px;height:2px;background:#6A6A6A"></div>
<div style="position:absolute;left:77px;top:690px;width:2px;height:2px;background:#6A6A6A"></div>
<div style="position:absolute;left:81px;top:690px;width:2px;height:2px;background:#6A6A6A"></div>
<div style="position:absolute;left:85px;top:690px;width:2px;height:2px;background:#6A6A6A"></div>
<div style="position:absolute;left:89px;top:690px;width:2px;height:2px;background:#6A6A6A"></div>
<div style="position:absolute;left:93px;top:690px;width:2px;height:2px;background:#6A6A6A"></div>
<div style="position:absolute;left:97px;top:690px;width:2px;height:2px;background:#6A6A6A"></div>
<div style="position:absolute;left:101px;top:690px;width:2px;height:2px;background:#6A6A6A"></div>
<div style="position:absolute;left:105px;top:690px;width:2px;height:2px;background:#6A6A6A"></div>
<div style="position:absolute;left:109px;top:690px;width:2px;height:2px;background:#6A6A6A"></div>
<div style="position:absolute;left:113px;top:690px;width:2px;height:2px;background:#6A6A6A"></div>
<div style="position:absolute;left:117px;top:690px;width:2px;height:2px;background:#6A6A6A"></div>
<div style="position:absolute;left:121px;top:690px;width:2px;height:2px;background:#6A6A6A"></div>
<div style="position:absolute;left:125px;top:690px;width:2px;height:2px;background:#6A6A6A"></div>
<div style="position:absolute;left:129px;top:690px;width:2px;height:2px;background:#6A6A6A"></div>
<div style="position:absolute;left:133px;top:690px;width:2px;height:2px;background:#6A6A6A"></div>
<div style="position:absolute;left:137px;top:690px;width:2px;height:2px;background:#6A6A6A"></div>
<div style="position:absolute;left:141px;top:690px;width:2px;height:2px;background:#6A6A6A"></div>
<div style="position:absolute;left:145px;top:690px;width:2px;height:2px;background:#6A6A6A"></div>
<div style="position:absolute;left:149px;top:690px;width:2px;height:2px;background:#6A6A6A"></div>
<div style="position:absolute;left:153px;top:690px;width:2px;height:2px;background:#6A6A6A"></div>
<div style="position:absolute;left:157px;top:690px;width:2px;height:2px;background:#6A6A6A"></div>
<div style="position:absolute;left:161px;top:690px;width:2px;height:2px;background:#6A6A6A"></div>
<div style="position:absolute;left:165px;top:690px;width:2px;height:2px;background:#6A6A6A"></div>
<div style="position:absolute;left:169px;top:690px;width:2px;height:2px;background:#6A6A6A"></div>
<div style="position:absolute;left:173px;top:690px;width:2px;height:2px;background:#6A6A6A"></div>
<div style="position:absolute;left:177px;top:690px;width:2px;height:2px;background:#6A6A6A"></div>
<div style="position:absolute;left:181px;top:690px;width:2px;height:2px;background:#6A6A6A"></div>
<div style="position:absolute;left:185px;top:690px;width:2px;height:2px;background:#6A6A6A"></div>
<div style="position:absolute;left:189px;top:690px;width:2px;height:2px;background:#6A6A6A"></div>
<div style="position:absolute;left:193px;top:690px;width:2px;height:2px;background:#6A6A6A"></div>
<div style="position:absolute;left:197px;top:690px;width:2px;height:2px;background:#6A6A6A"></div>
<div style="position:absolute;left:201px;top:690px;width:2px;height:2px;background:#6A6A6A"></div>
<div style="position:absolute;left:205px;top:690px;width:2px;height:2px;background:#6A6A6A"></div>
<div style="position:absolute;left:209px;top:690px;width:2px;height:2px;background:#6A6A6A"></div>
<div style="position:absolute;left:213px;top:690px;width:2px;height:2px;background:#6A6A6A"></div>
<div style="position:absolute;left:217px;top:690px;width:2px;height:2px;background:#6A6A6A"></div>
<div style="position:absolute;left:221px;top:690px;width:2px;height:2px;background:#6A6A6A"></div>
<div style="position:absolute;left:225px;top:690px;width:2px;height:2px;background:#6A6A6A"></div>
<div style="position:absolute;left:229px;top:690px;width:2px;height:2px;background:#6A6A6A"></div>
<div style="position:absolute;left:233px;top:690px;width:2px;height:2px;background:#6A6A6A"></div>
<div style="position:absolute;left:237px;top:690px;width:2px;height:2px;background:#6A6A6A"></div>
<div style="position:absolute;left:241px;top:690px;width:2px;height:2px;background:#6A6A6A"></div>
<div style="position:absolute;left:245px;top:690px;width:2px;height:2px;background:#6A6A6A"></div>
<div style="position:absolute;left:249px;top:690px;width:2px;height:2px;background:#6A6A6A"></div>
<div style="position:absolute;left:253px;top:690px;width:2px;height:2px;background:#6A6A6A"></div>
<div style="position:absolute;left:257px;top:690px;width:2px;height:2px;background:#6A6A6A"></div>
<div style="position:absolute;left:261px;top:690px;width:2px;height:2px;background:#6A6A6A"></div>
<div style="position:absolute;left:265px;top:690px;width:2px;height:2px;background:#6A6A6A"></div>
<div style="position:absolute;left:269px;top:690px;width:2px;height:2px;background:#6A6A6A"></div>
<div style="position:absolute;left:273px;top:690px;width:2px;height:2px;background:#6A6A6A"></div>
<div style="position:absolute;left:277px;top:690px;width:2px;height:2px;background:#6A6A6A"></div>
<div style="position:absolute;left:281px;top:690px;width:2px;height:2px;background:#6A6A6A"></div>
<div style="position:absolute;left:285px;top:690px;width:2px;height:2px;background:#6A6A6A"></div>
<div style="position:absolute;left:289px;top:690px;width:2px;height:2px;background:#6A6A6A"></div>
<div style="position:absolute;left:293px;top:690px;width:2px;height:2px;background:#6A6A6A"></div>
<div style="position:absolute;left:297px;top:690px;width:2px;height:2px;background:#6A6A6A"></div>
<div style="position:absolute;left:301px;top:690px;width:2px;height:2px;background:#6A6A6A"></div>
<div style="position:absolute;left:305px;top:690px;width:2px;height:2px;background:#6A6A6A"></div>
<div style="position:absolute;left:309px;top:690px;width:2px;height:2px;background:#6A6A6A"></div>
<div style="position:absolute;left:313px;top:690px;width:2px;height:2px;background:#6A6A6A"></div>
<div style="position:absolute;left:317px;top:690px;width:2px;height:2px;background:#6A6A6A"></div>
<div style="position:absolute;left:321px;top:690px;width:2px;height:2px;background:#6A6A6A"></div>
<div style="position:absolute;left:325px;top:690px;width:2px;height:2px;background:#6A6A6A"></div>
<div style="position:absolute;left:329px;top:690px;width:2px;height:2px;background:#6A6A6A"></div>
<div style="position:absolute;left:333px;top:690px;width:2px;height:2px;background:#6A6A6A"></div>
<div style="position:absolute;left:337px;top:690px;width:2px;height:2px;background:#6A6A6A"></div>
<div style="position:absolute;left:341px;top:690px;width:2px;height:2px;background:#6A6A6A"></div>
<div style="position:absolute;left:345px;top:690px;width:2px;height:2px;background:#6A6A6A"></div>
<div style="position:absolute;left:349px;top:690px;width:2px;height:2px;background:#6A6A6A"></div>
<div style="position:absolute;left:353px;top:690px;width:2px;height:2px;background:#6A6A6A"></div>
<div style="position:absolute;left:357px;top:690px;width:2px;height:2px;background:#6A6A6A"></div>
<div style="position:absolute;left:361px;top:690px;width:2px;height:2px;background:#6A6A6A"></div>
<div style="position:absolute;left:365px;top:690px;width:2px;height:2px;background:#6A6A6A"></div>
<div style="position:absolute;left:369px;top:690px;width:2px;height:2px;background:#6A6A6A"></div>
<div style="position:absolute;left:373px;top:690px;width:2px;height:2px;background:#6A6A6A"></div>
<div style="position:absolute;left:377px;top:690px;width:2px;height:2px;background:#6A6A6A"></div>
<div style="position:absolute;left:381px;top:690px;width:2px;height:2px;background:#6A6A6A"></div>
<div style="position:absolute;left:385px;top:690px;width:2px;height:2px;background:#6A6A6A"></div>
<div style="position:absolute;left:389px;top:690px;width:2px;height:2px;background:#6A6A6A"></div>
<div style="position:absolute;left:393px;top:690px;width:2px;height:2px;background:#6A6A6A"></div>
<div style="position:absolute;left:397px;top:690px;width:2px;height:2px;background:#6A6A6A"></div>
<div style="position:absolute;left:401px;top:690px;width:2px;height:2px;background:#6A6A6A"></div>
<div style="position:absolute;left:405px;top:690px;width:2px;height:2px;background:#6A6A6A"></div>
<div style="position:absolute;left:409px;top:690px;width:2px;height:2px;background:#6A6A6A"></div>
<div style="position:absolute;left:413px;top:690px;width:2px;height:2px;background:#6A6A6A"></div>
<div style="position:absolute;left:417px;top:690px;width:2px;height:2px;background:#6A6A6A"></div>
<div style="position:absolute;left:421px;top:690px;width:2px;height:2px;background:#6A6A6A"></div>
<div style="position:absolute;left:425px;top:690px;width:2px;height:2px;background:#6A6A6A"></div>
<div style="position:absolute;left:429px;top:690px;width:2px;height:2px;background:#6A6A6A"></div>
<div style="position:absolute;left:433px;top:690px;width:2px;height:2px;background:#6A6A6A"></div>
<div style="position:absolute;left:437px;top:690px;width:2px;height:2px;background:#6A6A6A"></div>
<div style="position:absolute;left:441px;top:690px;width:2px;height:2px;background:#6A6A6A"></div>
<div style="position:absolute;left:445px;top:690px;width:2px;height:2px;background:#6A6A6A"></div>
<div style="position:absolute;left:449px;top:690px;width:2px;height:2px;background:#6A6A6A"></div>
<div style="position:absolute;left:453px;top:690px;width:2px;height:2px;background:#6A6A6A"></div>
<div style="position:absolute;left:457px;top:690px;width:2px;height:2px;background:#6A6A6A"></div>
<div style="position:absolute;left:461px;top:690px;width:2px;height:2px;background:#6A6A6A"></div>
<div style="position:absolute;left:465px;top:690px;width:2px;height:2px;background:#6A6A6A"></div>
<div style="position:absolute;left:469px;top:690px;width:2px;height:2px;background:#6A6A6A"></div>
<div style="position:absolute;left:473px;top:690px;width:2px;height:2px;background:#6A6A6A"></div>
<div style="position:absolute;left:477px;top:690px;width:2px;height:2px;background:#6A6A6A"></div>
<div style="position:absolute;left:481px;top:690px;width:2px;height:2px;background:#6A6A6A"></div>
<div style="position:absolute;left:485px;top:690px;width:2px;height:2px;background:#6A6A6A"></div>
<div style="position:absolute;left:489px;top:690px;width:2px;height:2px;background:#6A6A6A"></div>
<div style="position:absolute;left:493px;top:690px;width:2px;height:2px;background:#6A6A6A"></div>
<div style="position:absolute;left:497px;top:690px;width:2px;height:2px;background:#6A6A6A"></div>
<div style="position:absolute;left:501px;top:690px;width:2px;height:2px;background:#6A6A6A"></div>
<div style="position:absolute;left:505px;top:690px;width:2px;height:2px;background:#6A6A6A"></div>
<div style="position:absolute;left:509px;top:690px;width:2px;height:2px;background:#6A6A6A"></div>
<div style="position:absolute;left:513px;top:690px;width:2px;height:2px;background:#6A6A6A"></div>
<div style="position:absolute;left:517px;top:690px;width:2px;height:2px;background:#6A6A6A"></div>
<div style="position:absolute;left:521px;top:690px;width:2px;height:2px;background:#6A6A6A"></div>
<div style="position:absolute;left:525px;top:690px;width:2px;height:2px;background:#6A6A6A"></div>
<div style="position:absolute;left:529px;top:690px;width:2px;height:2px;background:#6A6A6A"></div>
<div style="position:absolute;left:533px;top:690px;width:2px;height:2px;background:#6A6A6A"></div>
<div style="position:absolute;left:537px;top:690px;width:2px;height:2px;background:#6A6A6A"></div>
<div style="position:absolute;left:541px;top:690px;width:2px;height:2px;background:#6A6A6A"></div>
<div style="position:absolute;left:545px;top:690px;width:2px;height:2px;background:#6A6A6A"></div>
<div style="position:absolute;left:549px;top:690px;width:2px;height:2px;background:#6A6A6A"></div>
<div style="position:absolute;left:553px;top:690px;width:2px;height:2px;background:#6A6A6A"></div>
<div style="position:absolute;left:557px;top:690px;width:2px;height:2px;background:#6A6A6A"></div>
<div style="position:absolute;left:561px;top:690px;width:2px;height:2px;background:#6A6A6A"></div>
<div style="position:absolute;left:565px;top:690px;width:2px;height:2px;background:#6A6A6A"></div>
<div style="position:absolute;left:569px;top:690px;width:2px;height:2px;background:#6A6A6A"></div>
<div style="position:absolute;left:573px;top:690px;width:2px;height:2px;background:#6A6A6A"></div>
<div style="position:absolute;left:577px;top:690px;width:2px;height:2px;background:#6A6A6A"></div>
<div style="position:absolute;left:581px;top:690px;width:2px;height:2px;background:#6A6A6A"></div>
<div style="position:absolute;left:585px;top:690px;width:2px;height:2px;background:#6A6A6A"></div>
<div style="position:absolute;left:589px;top:690px;width:2px;height:2px;background:#6A6A6A"></div>
<div style="position:absolute;left:593px;top:690px;width:2px;height:2px;background:#6A6A6A"></div>
<div style="position:absolute;left:597px;top:690px;width:2px;height:2px;background:#6A6A6A"></div>
<div style="position:absolute;left:601px;top:690px;width:2px;height:2px;background:#6A6A6A"></div>
<div style="position:absolute;left:605px;top:690px;width:2px;height:2px;background:#6A6A6A"></div>
<div style="position:absolute;left:609px;top:690px;width:2px;height:2px;background:#6A6A6A"></div>
<div style="position:absolute;left:613px;top:690px;width:2px;height:2px;background:#6A6A6A"></div>
<div style="position:absolute;left:617px;top:690px;width:2px;height:2px;background:#6A6A6A"></div>
<div style="position:absolute;left:621px;top:690px;width:2px;height:2px;background:#6A6A6A"></div>
<div style="position:absolute;left:625px;top:690px;width:2px;height:2px;background:#6A6A6A"></div>
<div style="position:absolute;left:629px;top:690px;width:2px;height:2px;background:#6A6A6A"></div>
<div style="position:absolute;left:633px;top:690px;width:2px;height:2px;background:#6A6A6A"></div>
<div style="position:absolute;left:637px;top:690px;width:2px;height:2px;background:#6A6A6A"></div>
<div style="position:absolute;left:641px;top:690px;width:2px;height:2px;background:#6A6A6A"></div>
<div style="position:absolute;left:645px;top:690px;width:2px;height:2px;background:#6A6A6A"></div>
<div style="position:absolute;left:649px;top:690px;width:2px;height:2px;background:#6A6A6A"></div>
<div style="position:absolute;left:653px;top:690px;width:2px;height:2px;background:#6A6A6A"></div>
<div style="position:absolute;left:657px;top:690px;width:2px;height:2px;background:#6A6A6A"></div>
<div style="position:absolute;left:661px;top:690px;width:2px;height:2px;background:#6A6A6A"></div>
<div style="position:absolute;left:665px;top:690px;width:2px;height:2px;background:#6A6A6A"></div>
<div style="position:absolute;left:669px;top:690px;width:2px;height:2px;background:#6A6A6A"></div>
<div style="position:absolute;left:673px;top:690px;width:2px;height:2px;background:#6A6A6A"></div>
<div style="position:absolute;left:677px;top:690px;width:2px;height:2px;background:#6A6A6A"></div>
<div style="position:absolute;left:681px;top:690px;width:2px;height:2px;background:#6A6A6A"></div>
<div style="position:absolute;left:685px;top:690px;width:2px;height:2px;background:#6A6A6A"></div>
<div style="position:absolute;left:689px;top:690px;width:2px;height:2px;background:#6A6A6A"></div>
<div style="position:absolute;left:693px;top:690px;width:2px;height:2px;background:#6A6A6A"></div>
<div style="position:absolute;left:697px;top:690px;width:2px;height:2px;background:#6A6A6A"></div>
<div style="position:absolute;left:701px;top:690px;width:2px;height:2px;background:#6A6A6A"></div>
<div style="position:absolute;left:705px;top:690px;width:2px;height:2px;background:#6A6A6A"></div>
<div style="position:absolute;left:709px;top:690px;width:2px;height:2px;background:#6A6A6A"></div>
<div style="position:absolute;left:713px;top:690px;width:2px;height:2px;background:#6A6A6A"></div>
<div style="position:absolute;left:717px;top:690px;width:2px;height:2px;background:#6A6A6A"></div>
<div style="position:absolute;left:721px;top:690px;width:2px;height:2px;background:#6A6A6A"></div>
<div style="position:absolute;left:725px;top:690px;width:2px;height:2px;background:#6A6A6A"></div>
<div style="position:absolute;left:729px;top:690px;width:2px;height:2px;background:#6A6A6A"></div>
<div style="position:absolute;left:733px;top:690px;width:2px;height:2px;background:#6A6A6A"></div>
<div style="position:absolute;left:737px;top:690px;width:2px;height:2px;background:#6A6A6A"></div>
<div style="position:absolute;left:741px;top:690px;width:2px;height:2px;background:#6A6A6A"></div>
<div style="position:absolute;left:745px;top:690px;width:2px;height:2px;background:#6A6A6A"></div>
<div style="position:absolute;left:749px;top:690px;width:2px;height:2px;background:#6A6A6A"></div>
<div style="position:absolute;left:753px;top:690px;width:2px;height:2px;background:#6A6A6A"></div>
<div style="position:absolute;left:757px;top:690px;width:2px;height:2px;background:#6A6A6A"></div>
<div style="position:absolute;left:761px;top:690px;width:2px;height:2px;background:#6A6A6A"></div>
<div style="position:absolute;left:765px;top:690px;width:2px;height:2px;background:#6A6A6A"></div>
<div style="position:absolute;left:769px;top:690px;width:2px;height:2px;background:#6A6A6A"></div>
<div style="position:absolute;left:773px;top:690px;width:2px;height:2px;background:#6A6A6A"></div>
<div style="position:absolute;left:777px;top:690px;width:2px;height:2px;background:#6A6A6A"></div>
<div style="position:absolute;left:781px;top:690px;width:2px;height:2px;background:#6A6A6A"></div>
<div style="position:absolute;left:785px;top:690px;width:2px;height:2px;background:#6A6A6A"></div>
<div style="position:absolute;left:789px;top:690px;width:2px;height:2px;background:#6A6A6A"></div>
<div style="position:absolute;left:793px;top:690px;width:2px;height:2px;background:#6A6A6A"></div>
<div style="position:absolute;left:797px;top:690px;width:2px;height:2px;background:#6A6A6A"></div>
<div style="position:absolute;left:801px;top:690px;width:2px;height:2px;background:#6A6A6A"></div>
<div style="position:absolute;left:805px;top:690px;width:2px;height:2px;background:#6A6A6A"></div>
<div style="position:absolute;left:809px;top:690px;width:2px;height:2px;background:#6A6A6A"></div>
<div style="position:absolute;left:813px;top:690px;width:2px;height:2px;background:#6A6A6A"></div>
<div style="position:absolute;left:817px;top:690px;width:2px;height:2px;background:#6A6A6A"></div>
<div style="position:absolute;left:821px;top:690px;width:2px;height:2px;background:#6A6A6A"></div>
<div style="position:absolute;left:825px;top:690px;width:2px;height:2px;background:#6A6A6A"></div>
<div style="position:absolute;left:829px;top:690px;width:2px;height:2px;background:#6A6A6A"></div>
<div style="position:absolute;left:833px;top:690px;width:2px;height:2px;background:#6A6A6A"></div>
<div style="position:absolute;left:837px;top:690px;width:2px;height:2px;background:#6A6A6A"></div>
<div style="position:absolute;left:841px;top:690px;width:2px;height:2px;background:#6A6A6A"></div>
<div style="position:absolute;left:845px;top:690px;width:2px;height:2px;background:#6A6A6A"></div>
<div style="position:absolute;left:849px;top:690px;width:2px;height:2px;background:#6A6A6A"></div>
<div style="position:absolute;left:853px;top:690px;width:2px;height:2px;background:#6A6A6A"></div>
<div style="position:absolute;left:857px;top:690px;width:2px;height:2px;background:#6A6A6A"></div>
<div style="position:absolute;left:861px;top:690px;width:2px;height:2px;background:#6A6A6A"></div>
<div style="position:absolute;left:865px;top:690px;width:2px;height:2px;background:#6A6A6A"></div>
<div style="position:absolute;left:869px;top:690px;width:2px;height:2px;background:#6A6A6A"></div>
<div style="position:absolute;left:873px;top:690px;width:2px;height:2px;background:#6A6A6A"></div>
<div style="position:absolute;left:877px;top:690px;width:2px;height:2px;background:#6A6A6A"></div>
<div style="position:absolute;left:881px;top:690px;width:2px;height:2px;background:#6A6A6A"></div>
<div style="position:absolute;left:885px;top:690px;width:2px;height:2px;background:#6A6A6A"></div>
<div style="position:absolute;left:889px;top:690px;width:2px;height:2px;background:#6A6A6A"></div>
<div style="position:absolute;left:893px;top:690px;width:2px;height:2px;background:#6A6A6A"></div>
<div style="position:absolute;left:897px;top:690px;width:2px;height:2px;background:#6A6A6A"></div>
<div style="position:absolute;left:901px;top:690px;width:2px;height:2px;background:#6A6A6A"></div>
<div style="position:absolute;left:905px;top:690px;width:2px;height:2px;background:#6A6A6A"></div>
<div style="position:absolute;left:909px;top:690px;width:2px;height:2px;background:#6A6A6A"></div>
<div style="position:absolute;left:913px;top:690px;width:2px;height:2px;background:#6A6A6A"></div>
<div style="position:absolute;left:917px;top:690px;width:2px;height:2px;background:#6A6A6A"></div>
<div style="position:absolute;left:921px;top:690px;width:2px;height:2px;background:#6A6A6A"></div>
<div style="position:absolute;left:925px;top:690px;width:2px;height:2px;background:#6A6A6A"></div>
<div style="position:absolute;left:929px;top:690px;width:2px;height:2px;background:#6A6A6A"></div>
<div style="position:absolute;left:933px;top:690px;width:2px;height:2px;background:#6A6A6A"></div>
<div style="position:absolute;left:937px;top:690px;width:2px;height:2px;background:#6A6A6A"></div>
<div style="position:absolute;left:941px;top:690px;width:2px;height:2px;background:#6A6A6A"></div>
<div style="position:absolute;left:945px;top:690px;width:2px;height:2px;background:#6A6A6A"></div>
<div style="position:absolute;left:949px;top:690px;width:2px;height:2px;background:#6A6A6A"></div>
<div style="position:absolute;left:953px;top:690px;width:2px;height:2px;background:#6A6A6A"></div>
<div style="position:absolute;left:957px;top:690px;width:2px;height:2px;background:#6A6A6A"></div>
<div style="position:absolute;left:961px;top:690px;width:2px;height:2px;background:#6A6A6A"></div>
<div style="position:absolute;left:965px;top:690px;width:2px;height:2px;background:#6A6A6A"></div>
<div style="position:absolute;left:969px;top:690px;width:2px;height:2px;background:#6A6A6A"></div>
<div style="position:absolute;left:973px;top:690px;width:2px;height:2px;background:#6A6A6A"></div>
<svg style="position:absolute;left:974px;top:685px;" width="48" height="12" viewBox="0 0 48 12"><path d="M0 6 L5 0.5 L47 0.5 L47 11.5 L5 11.5 Z" fill="#000"/></svg>
<div style="position:absolute;left:68px;top:165px;width:1px;height:5px;background:rgba(50,50,50,0.8)"></div>
<div style="position:absolute;left:70px;top:166px;width:6px;height:3px;background:rgba(120,120,120,0.2)"></div>
<div style="position:absolute;left:68px;top:170px;width:1px;height:5px;background:rgba(50,50,50,0.8)"></div>
<div style="position:absolute;left:70px;top:171px;width:6px;height:3px;background:rgba(120,120,120,0.2)"></div>
<div style="position:absolute;left:68px;top:175px;width:10px;height:5px;background:#C9EFC9;border:1px solid #98C598"></div>
<div style="position:absolute;left:70px;top:176px;width:7px;height:3px;background:rgba(70,60,60,0.16)"></div>
<div style="position:absolute;left:68px;top:180px;width:13px;height:5px;background:#C9EFC9;border:1px solid #98C598"></div>
<div style="position:absolute;left:70px;top:181px;width:7px;height:3px;background:rgba(70,60,60,0.16)"></div>
<div style="position:absolute;left:68px;top:184px;width:9px;height:5px;background:#F7C2C2;border:1px solid #CF9898"></div>
<div style="position:absolute;left:70px;top:185px;width:6px;height:3px;background:rgba(70,60,60,0.16)"></div>
<div style="position:absolute;left:68px;top:189px;width:1px;height:5px;background:rgba(50,50,50,0.8)"></div>
<div style="position:absolute;left:70px;top:190px;width:6px;height:3px;background:rgba(120,120,120,0.2)"></div>
<div style="position:absolute;left:68px;top:194px;width:12px;height:5px;background:#93DB93;border:1px solid #6AAE6A"></div>
<div style="position:absolute;left:70px;top:195px;width:7px;height:3px;background:rgba(70,60,60,0.16)"></div>
<div style="position:absolute;left:68px;top:199px;width:8px;height:5px;background:#F7C2C2;border:1px solid #CF9898"></div>
<div style="position:absolute;left:70px;top:200px;width:5px;height:3px;background:rgba(70,60,60,0.16)"></div>
<div style="position:absolute;left:68px;top:203px;width:1px;height:5px;background:rgba(50,50,50,0.8)"></div>
<div style="position:absolute;left:70px;top:204px;width:6px;height:3px;background:rgba(120,120,120,0.2)"></div>
<div style="position:absolute;left:68px;top:208px;width:1px;height:5px;background:rgba(50,50,50,0.8)"></div>
<div style="position:absolute;left:70px;top:209px;width:6px;height:3px;background:rgba(120,120,120,0.2)"></div>
<div style="position:absolute;left:68px;top:213px;width:1px;height:5px;background:rgba(50,50,50,0.8)"></div>
<div style="position:absolute;left:70px;top:214px;width:6px;height:3px;background:rgba(120,120,120,0.2)"></div>
<div style="position:absolute;left:68px;top:217px;width:1px;height:5px;background:rgba(50,50,50,0.8)"></div>
<div style="position:absolute;left:70px;top:218px;width:6px;height:3px;background:rgba(120,120,120,0.2)"></div>
<div style="position:absolute;left:68px;top:222px;width:1px;height:5px;background:rgba(50,50,50,0.8)"></div>
<div style="position:absolute;left:70px;top:223px;width:6px;height:3px;background:rgba(120,120,120,0.2)"></div>
<div style="position:absolute;left:68px;top:227px;width:1px;height:5px;background:rgba(50,50,50,0.8)"></div>
<div style="position:absolute;left:70px;top:228px;width:6px;height:3px;background:rgba(120,120,120,0.2)"></div>
<div style="position:absolute;left:68px;top:232px;width:11px;height:5px;background:#C9EFC9;border:1px solid #98C598"></div>
<div style="position:absolute;left:70px;top:233px;width:7px;height:3px;background:rgba(70,60,60,0.16)"></div>
<div style="position:absolute;left:68px;top:236px;width:5px;height:5px;background:#E3B9B9;border:1px solid rgba(110,70,70,0.6)"></div>
<div style="position:absolute;left:68px;top:241px;width:22px;height:5px;background:#93DB93;border:1px solid #6AAE6A"></div>
<div style="position:absolute;left:70px;top:242px;width:7px;height:3px;background:rgba(70,60,60,0.16)"></div>
<div style="position:absolute;left:68px;top:246px;width:12px;height:5px;background:#C9EFC9;border:1px solid #98C598"></div>
<div style="position:absolute;left:70px;top:247px;width:7px;height:3px;background:rgba(70,60,60,0.16)"></div>
<div style="position:absolute;left:68px;top:251px;width:19px;height:5px;background:#C9EFC9;border:1px solid #98C598"></div>
<div style="position:absolute;left:70px;top:252px;width:7px;height:3px;background:rgba(70,60,60,0.16)"></div>
<div style="position:absolute;left:68px;top:255px;width:10px;height:5px;background:#F7C2C2;border:1px solid #CF9898"></div>
<div style="position:absolute;left:70px;top:256px;width:7px;height:3px;background:rgba(70,60,60,0.16)"></div>
<div style="position:absolute;left:68px;top:260px;width:5px;height:5px;background:#E3B9B9;border:1px solid rgba(110,70,70,0.6)"></div>
<div style="position:absolute;left:62px;top:167px;width:6px;height:94px;background:#3AAFA9"></div>
<div style="position:absolute;left:68px;top:243px;width:68px;height:6px;background:#fff;border:1px solid #1F5F1F"></div>
<div style="position:absolute;left:69px;top:244px;width:21px;height:4px;background:#3DB43D"></div>
<div style="position:absolute;left:25px;top:257px;width:35px;height:5px;background:#fff;border:1px solid #333;border-left:none"></div>
<div style="position:absolute;left:146px;top:167px;width:1px;height:5px;background:rgba(50,50,50,0.8)"></div>
<div style="position:absolute;left:148px;top:168px;width:6px;height:3px;background:rgba(120,120,120,0.2)"></div>
<div style="position:absolute;left:146px;top:172px;width:1px;height:5px;background:rgba(50,50,50,0.8)"></div>
<div style="position:absolute;left:148px;top:173px;width:6px;height:3px;background:rgba(120,120,120,0.2)"></div>
<div style="position:absolute;left:146px;top:176px;width:5px;height:5px;background:#E0C8C8;border:1px solid #B08080"></div>
<div style="position:absolute;left:148px;top:177px;width:2px;height:3px;background:rgba(70,60,60,0.16)"></div>
<div style="position:absolute;left:146px;top:181px;width:12px;height:5px;background:#F7C2C2;border:1px solid #CF9898"></div>
<div style="position:absolute;left:148px;top:182px;width:7px;height:3px;background:rgba(70,60,60,0.16)"></div>
<div style="position:absolute;left:146px;top:186px;width:17px;height:5px;background:#C9EFC9;border:1px solid #98C598"></div>
<div style="position:absolute;left:148px;top:187px;width:7px;height:3px;background:rgba(70,60,60,0.16)"></div>
<div style="position:absolute;left:146px;top:191px;width:21px;height:5px;background:#F7C2C2;border:1px solid #CF9898"></div>
<div style="position:absolute;left:148px;top:192px;width:7px;height:3px;background:rgba(70,60,60,0.16)"></div>
<div style="position:absolute;left:146px;top:195px;width:8px;height:5px;background:#EF8C8C;border:1px solid #C46464"></div>
<div style="position:absolute;left:148px;top:196px;width:5px;height:3px;background:rgba(70,60,60,0.16)"></div>
<div style="position:absolute;left:146px;top:200px;width:18px;height:5px;background:#C9EFC9;border:1px solid #98C598"></div>
<div style="position:absolute;left:148px;top:201px;width:7px;height:3px;background:rgba(70,60,60,0.16)"></div>
<div style="position:absolute;left:146px;top:205px;width:28px;height:5px;background:#F7C2C2;border:1px solid #CF9898"></div>
<div style="position:absolute;left:148px;top:206px;width:7px;height:3px;background:rgba(70,60,60,0.16)"></div>
<div style="position:absolute;left:146px;top:210px;width:15px;height:5px;background:#C9EFC9;border:1px solid #98C598"></div>
<div style="position:absolute;left:148px;top:211px;width:7px;height:3px;background:rgba(70,60,60,0.16)"></div>
<div style="position:absolute;left:146px;top:214px;width:21px;height:5px;background:#F7C2C2;border:1px solid #CF9898"></div>
<div style="position:absolute;left:148px;top:215px;width:7px;height:3px;background:rgba(70,60,60,0.16)"></div>
<div style="position:absolute;left:146px;top:219px;width:28px;height:5px;background:#F7C2C2;border:1px solid #CF9898"></div>
<div style="position:absolute;left:148px;top:220px;width:7px;height:3px;background:rgba(70,60,60,0.16)"></div>
<div style="position:absolute;left:146px;top:224px;width:26px;height:5px;background:#C9EFC9;border:1px solid #98C598"></div>
<div style="position:absolute;left:148px;top:225px;width:7px;height:3px;background:rgba(70,60,60,0.16)"></div>
<div style="position:absolute;left:146px;top:229px;width:29px;height:5px;background:#C9EFC9;border:1px solid #98C598"></div>
<div style="position:absolute;left:148px;top:230px;width:7px;height:3px;background:rgba(70,60,60,0.16)"></div>
<div style="position:absolute;left:146px;top:233px;width:27px;height:5px;background:#F7C2C2;border:1px solid #CF9898"></div>
<div style="position:absolute;left:148px;top:234px;width:7px;height:3px;background:rgba(70,60,60,0.16)"></div>
<div style="position:absolute;left:146px;top:238px;width:24px;height:5px;background:#F7C2C2;border:1px solid #CF9898"></div>
<div style="position:absolute;left:148px;top:239px;width:7px;height:3px;background:rgba(70,60,60,0.16)"></div>
<div style="position:absolute;left:146px;top:243px;width:35px;height:5px;background:#93DB93;border:1px solid #6AAE6A"></div>
<div style="position:absolute;left:148px;top:244px;width:7px;height:3px;background:rgba(70,60,60,0.16)"></div>
<div style="position:absolute;left:146px;top:248px;width:35px;height:5px;background:#93DB93;border:1px solid #6AAE6A"></div>
<div style="position:absolute;left:148px;top:249px;width:7px;height:3px;background:rgba(70,60,60,0.16)"></div>
<div style="position:absolute;left:146px;top:252px;width:53px;height:5px;background:#EF8C8C;border:1px solid #C46464"></div>
<div style="position:absolute;left:148px;top:253px;width:7px;height:3px;background:rgba(70,60,60,0.16)"></div>
<div style="position:absolute;left:146px;top:257px;width:46px;height:5px;background:#93DB93;border:1px solid #6AAE6A"></div>
<div style="position:absolute;left:148px;top:258px;width:7px;height:3px;background:rgba(70,60,60,0.16)"></div>
<div style="position:absolute;left:146px;top:262px;width:58px;height:5px;background:#EF8C8C;border:1px solid #C46464"></div>
<div style="position:absolute;left:148px;top:263px;width:7px;height:3px;background:rgba(70,60,60,0.16)"></div>
<div style="position:absolute;left:146px;top:267px;width:53px;height:5px;background:#93DB93;border:1px solid #6AAE6A"></div>
<div style="position:absolute;left:148px;top:268px;width:7px;height:3px;background:rgba(70,60,60,0.16)"></div>
<div style="position:absolute;left:146px;top:272px;width:62px;height:5px;background:#C9EFC9;border:1px solid #98C598"></div>
<div style="position:absolute;left:148px;top:273px;width:7px;height:3px;background:rgba(70,60,60,0.16)"></div>
<div style="position:absolute;left:146px;top:276px;width:49px;height:5px;background:#EF8C8C;border:1px solid #C46464"></div>
<div style="position:absolute;left:148px;top:277px;width:7px;height:3px;background:rgba(70,60,60,0.16)"></div>
<div style="position:absolute;left:146px;top:281px;width:34px;height:5px;background:#93DB93;border:1px solid #6AAE6A"></div>
<div style="position:absolute;left:148px;top:282px;width:7px;height:3px;background:rgba(70,60,60,0.16)"></div>
<div style="position:absolute;left:146px;top:286px;width:52px;height:5px;background:#93DB93;border:1px solid #6AAE6A"></div>
<div style="position:absolute;left:148px;top:287px;width:7px;height:3px;background:rgba(70,60,60,0.16)"></div>
<div style="position:absolute;left:146px;top:291px;width:44px;height:5px;background:#93DB93;border:1px solid #6AAE6A"></div>
<div style="position:absolute;left:148px;top:292px;width:7px;height:3px;background:rgba(70,60,60,0.16)"></div>
<div style="position:absolute;left:146px;top:295px;width:40px;height:5px;background:#F7C2C2;border:1px solid #CF9898"></div>
<div style="position:absolute;left:148px;top:296px;width:7px;height:3px;background:rgba(70,60,60,0.16)"></div>
<div style="position:absolute;left:146px;top:300px;width:30px;height:5px;background:#C9EFC9;border:1px solid #98C598"></div>
<div style="position:absolute;left:148px;top:301px;width:7px;height:3px;background:rgba(70,60,60,0.16)"></div>
<div style="position:absolute;left:146px;top:305px;width:25px;height:5px;background:#F7C2C2;border:1px solid #CF9898"></div>
<div style="position:absolute;left:148px;top:306px;width:7px;height:3px;background:rgba(70,60,60,0.16)"></div>
<div style="position:absolute;left:146px;top:310px;width:5px;height:5px;background:#E3B9B9;border:1px solid rgba(110,70,70,0.6)"></div>
<div style="position:absolute;left:146px;top:314px;width:5px;height:5px;background:#E3B9B9;border:1px solid rgba(110,70,70,0.6)"></div>
<div style="position:absolute;left:146px;top:319px;width:5px;height:5px;background:#E3B9B9;border:1px solid rgba(110,70,70,0.6)"></div>
<div style="position:absolute;left:146px;top:324px;width:5px;height:5px;background:#E3B9B9;border:1px solid rgba(110,70,70,0.6)"></div>
<div style="position:absolute;left:146px;top:329px;width:1px;height:5px;background:rgba(50,50,50,0.8)"></div>
<div style="position:absolute;left:148px;top:330px;width:6px;height:3px;background:rgba(120,120,120,0.2)"></div>
<div style="position:absolute;left:139px;top:167px;width:6px;height:117px;background:#EC5757"></div>
<div style="position:absolute;left:146px;top:271px;width:68px;height:6px;background:#fff;border:1px solid #1F5F1F"></div>
<div style="position:absolute;left:147px;top:272px;width:61px;height:4px;background:#3DB43D"></div>
<div style="position:absolute;left:222px;top:209px;width:1px;height:5px;background:rgba(50,50,50,0.8)"></div>
<div style="position:absolute;left:224px;top:210px;width:6px;height:3px;background:rgba(120,120,120,0.2)"></div>
<div style="position:absolute;left:222px;top:214px;width:6px;height:5px;background:#93DB93;border:1px solid #6AAE6A"></div>
<div style="position:absolute;left:224px;top:215px;width:3px;height:3px;background:rgba(70,60,60,0.16)"></div>
<div style="position:absolute;left:222px;top:219px;width:8px;height:5px;background:#EF8C8C;border:1px solid #C46464"></div>
<div style="position:absolute;left:224px;top:220px;width:5px;height:3px;background:rgba(70,60,60,0.16)"></div>
<div style="position:absolute;left:222px;top:224px;width:8px;height:5px;background:#EF8C8C;border:1px solid #C46464"></div>
<div style="position:absolute;left:224px;top:225px;width:5px;height:3px;background:rgba(70,60,60,0.16)"></div>
<div style="position:absolute;left:222px;top:228px;width:16px;height:5px;background:#C9EFC9;border:1px solid #98C598"></div>
<div style="position:absolute;left:224px;top:229px;width:7px;height:3px;background:rgba(70,60,60,0.16)"></div>
<div style="position:absolute;left:222px;top:233px;width:23px;height:5px;background:#F7C2C2;border:1px solid #CF9898"></div>
<div style="position:absolute;left:224px;top:234px;width:7px;height:3px;background:rgba(70,60,60,0.16)"></div>
<div style="position:absolute;left:222px;top:238px;width:9px;height:5px;background:#C9EFC9;border:1px solid #98C598"></div>
<div style="position:absolute;left:224px;top:239px;width:6px;height:3px;background:rgba(70,60,60,0.16)"></div>
<div style="position:absolute;left:222px;top:242px;width:27px;height:5px;background:#93DB93;border:1px solid #6AAE6A"></div>
<div style="position:absolute;left:224px;top:243px;width:7px;height:3px;background:rgba(70,60,60,0.16)"></div>
<div style="position:absolute;left:222px;top:247px;width:33px;height:5px;background:#93DB93;border:1px solid #6AAE6A"></div>
<div style="position:absolute;left:224px;top:248px;width:7px;height:3px;background:rgba(70,60,60,0.16)"></div>
<div style="position:absolute;left:222px;top:252px;width:35px;height:5px;background:#EF8C8C;border:1px solid #C46464"></div>
<div style="position:absolute;left:224px;top:253px;width:7px;height:3px;background:rgba(70,60,60,0.16)"></div>
<div style="position:absolute;left:222px;top:257px;width:39px;height:5px;background:#EF8C8C;border:1px solid #C46464"></div>
<div style="position:absolute;left:224px;top:258px;width:7px;height:3px;background:rgba(70,60,60,0.16)"></div>
<div style="position:absolute;left:222px;top:261px;width:31px;height:5px;background:#93DB93;border:1px solid #6AAE6A"></div>
<div style="position:absolute;left:224px;top:262px;width:7px;height:3px;background:rgba(70,60,60,0.16)"></div>
<div style="position:absolute;left:222px;top:266px;width:32px;height:5px;background:#EF8C8C;border:1px solid #C46464"></div>
<div style="position:absolute;left:224px;top:267px;width:7px;height:3px;background:rgba(70,60,60,0.16)"></div>
<div style="position:absolute;left:222px;top:271px;width:47px;height:5px;background:#EF8C8C;border:1px solid #C46464"></div>
<div style="position:absolute;left:224px;top:272px;width:7px;height:3px;background:rgba(70,60,60,0.16)"></div>
<div style="position:absolute;left:222px;top:276px;width:24px;height:5px;background:#93DB93;border:1px solid #6AAE6A"></div>
<div style="position:absolute;left:224px;top:277px;width:7px;height:3px;background:rgba(70,60,60,0.16)"></div>
<div style="position:absolute;left:222px;top:280px;width:13px;height:5px;background:#C9EFC9;border:1px solid #98C598"></div>
<div style="position:absolute;left:224px;top:281px;width:7px;height:3px;background:rgba(70,60,60,0.16)"></div>
<div style="position:absolute;left:222px;top:285px;width:16px;height:5px;background:#C9EFC9;border:1px solid #98C598"></div>
<div style="position:absolute;left:224px;top:286px;width:7px;height:3px;background:rgba(70,60,60,0.16)"></div>
<div style="position:absolute;left:222px;top:290px;width:19px;height:5px;background:#C9EFC9;border:1px solid #98C598"></div>
<div style="position:absolute;left:224px;top:291px;width:7px;height:3px;background:rgba(70,60,60,0.16)"></div>
<div style="position:absolute;left:222px;top:295px;width:20px;height:5px;background:#F7C2C2;border:1px solid #CF9898"></div>
<div style="position:absolute;left:224px;top:296px;width:7px;height:3px;background:rgba(70,60,60,0.16)"></div>
<div style="position:absolute;left:222px;top:299px;width:25px;height:5px;background:#93DB93;border:1px solid #6AAE6A"></div>
<div style="position:absolute;left:224px;top:300px;width:7px;height:3px;background:rgba(70,60,60,0.16)"></div>
<div style="position:absolute;left:222px;top:304px;width:26px;height:5px;background:#93DB93;border:1px solid #6AAE6A"></div>
<div style="position:absolute;left:224px;top:305px;width:7px;height:3px;background:rgba(70,60,60,0.16)"></div>
<div style="position:absolute;left:222px;top:309px;width:35px;height:5px;background:#EF8C8C;border:1px solid #C46464"></div>
<div style="position:absolute;left:224px;top:310px;width:7px;height:3px;background:rgba(70,60,60,0.16)"></div>
<div style="position:absolute;left:222px;top:314px;width:21px;height:5px;background:#F7C2C2;border:1px solid #CF9898"></div>
<div style="position:absolute;left:224px;top:315px;width:7px;height:3px;background:rgba(70,60,60,0.16)"></div>
<div style="position:absolute;left:222px;top:318px;width:17px;height:5px;background:#F7C2C2;border:1px solid #CF9898"></div>
<div style="position:absolute;left:224px;top:319px;width:7px;height:3px;background:rgba(70,60,60,0.16)"></div>
<div style="position:absolute;left:222px;top:323px;width:12px;height:5px;background:#F7C2C2;border:1px solid #CF9898"></div>
<div style="position:absolute;left:224px;top:324px;width:7px;height:3px;background:rgba(70,60,60,0.16)"></div>
<div style="position:absolute;left:222px;top:328px;width:7px;height:5px;background:#93DB93;border:1px solid #6AAE6A"></div>
<div style="position:absolute;left:224px;top:329px;width:4px;height:3px;background:rgba(70,60,60,0.16)"></div>
<div style="position:absolute;left:222px;top:333px;width:1px;height:5px;background:rgba(50,50,50,0.8)"></div>
<div style="position:absolute;left:224px;top:334px;width:6px;height:3px;background:rgba(120,120,120,0.2)"></div>
<div style="position:absolute;left:215px;top:252px;width:6px;height:38px;background:#3AAFA9"></div>
<div style="position:absolute;left:222px;top:270px;width:68px;height:6px;background:#fff;border:1px solid #3A1A1A"></div>
<div style="position:absolute;left:223px;top:271px;width:46px;height:4px;background:#D41414"></div>
<div style="position:absolute;left:299px;top:214px;width:1px;height:5px;background:rgba(50,50,50,0.8)"></div>
<div style="position:absolute;left:301px;top:215px;width:6px;height:3px;background:rgba(120,120,120,0.2)"></div>
<div style="position:absolute;left:299px;top:218px;width:11px;height:5px;background:#C9EFC9;border:1px solid #98C598"></div>
<div style="position:absolute;left:301px;top:219px;width:7px;height:3px;background:rgba(70,60,60,0.16)"></div>
<div style="position:absolute;left:299px;top:223px;width:22px;height:5px;background:#EF8C8C;border:1px solid #C46464"></div>
<div style="position:absolute;left:301px;top:224px;width:7px;height:3px;background:rgba(70,60,60,0.16)"></div>
<div style="position:absolute;left:299px;top:228px;width:22px;height:5px;background:#93DB93;border:1px solid #6AAE6A"></div>
<div style="position:absolute;left:301px;top:229px;width:7px;height:3px;background:rgba(70,60,60,0.16)"></div>
<div style="position:absolute;left:299px;top:232px;width:38px;height:5px;background:#EF8C8C;border:1px solid #C46464"></div>
<div style="position:absolute;left:301px;top:233px;width:7px;height:3px;background:rgba(70,60,60,0.16)"></div>
<div style="position:absolute;left:299px;top:237px;width:43px;height:5px;background:#EF8C8C;border:1px solid #C46464"></div>
<div style="position:absolute;left:301px;top:238px;width:7px;height:3px;background:rgba(70,60,60,0.16)"></div>
<div style="position:absolute;left:299px;top:242px;width:16px;height:5px;background:#F7C2C2;border:1px solid #CF9898"></div>
<div style="position:absolute;left:301px;top:243px;width:7px;height:3px;background:rgba(70,60,60,0.16)"></div>
<div style="position:absolute;left:299px;top:246px;width:21px;height:5px;background:#EF8C8C;border:1px solid #C46464"></div>
<div style="position:absolute;left:301px;top:247px;width:7px;height:3px;background:rgba(70,60,60,0.16)"></div>
<div style="position:absolute;left:299px;top:251px;width:25px;height:5px;background:#EF8C8C;border:1px solid #C46464"></div>
<div style="position:absolute;left:301px;top:252px;width:7px;height:3px;background:rgba(70,60,60,0.16)"></div>
<div style="position:absolute;left:299px;top:256px;width:25px;height:5px;background:#EF8C8C;border:1px solid #C46464"></div>
<div style="position:absolute;left:301px;top:257px;width:7px;height:3px;background:rgba(70,60,60,0.16)"></div>
<div style="position:absolute;left:299px;top:260px;width:33px;height:5px;background:#EF8C8C;border:1px solid #C46464"></div>
<div style="position:absolute;left:301px;top:261px;width:7px;height:3px;background:rgba(70,60,60,0.16)"></div>
<div style="position:absolute;left:299px;top:265px;width:35px;height:5px;background:#EF8C8C;border:1px solid #C46464"></div>
<div style="position:absolute;left:301px;top:266px;width:7px;height:3px;background:rgba(70,60,60,0.16)"></div>
<div style="position:absolute;left:299px;top:270px;width:32px;height:5px;background:#93DB93;border:1px solid #6AAE6A"></div>
<div style="position:absolute;left:301px;top:271px;width:7px;height:3px;background:rgba(70,60,60,0.16)"></div>
<div style="position:absolute;left:299px;top:275px;width:26px;height:5px;background:#EF8C8C;border:1px solid #C46464"></div>
<div style="position:absolute;left:301px;top:276px;width:7px;height:3px;background:rgba(70,60,60,0.16)"></div>
<div style="position:absolute;left:299px;top:279px;width:29px;height:5px;background:#EF8C8C;border:1px solid #C46464"></div>
<div style="position:absolute;left:301px;top:280px;width:7px;height:3px;background:rgba(70,60,60,0.16)"></div>
<div style="position:absolute;left:299px;top:284px;width:16px;height:5px;background:#F7C2C2;border:1px solid #CF9898"></div>
<div style="position:absolute;left:301px;top:285px;width:7px;height:3px;background:rgba(70,60,60,0.16)"></div>
<div style="position:absolute;left:299px;top:289px;width:16px;height:5px;background:#F7C2C2;border:1px solid #CF9898"></div>
<div style="position:absolute;left:301px;top:290px;width:7px;height:3px;background:rgba(70,60,60,0.16)"></div>
<div style="position:absolute;left:299px;top:293px;width:1px;height:5px;background:rgba(50,50,50,0.8)"></div>
<div style="position:absolute;left:301px;top:294px;width:6px;height:3px;background:rgba(120,120,120,0.2)"></div>
<div style="position:absolute;left:299px;top:298px;width:6px;height:5px;background:#93DB93;border:1px solid #6AAE6A"></div>
<div style="position:absolute;left:301px;top:299px;width:3px;height:3px;background:rgba(70,60,60,0.16)"></div>
<div style="position:absolute;left:299px;top:303px;width:1px;height:5px;background:rgba(50,50,50,0.8)"></div>
<div style="position:absolute;left:301px;top:304px;width:6px;height:3px;background:rgba(120,120,120,0.2)"></div>
<div style="position:absolute;left:299px;top:307px;width:1px;height:5px;background:rgba(50,50,50,0.8)"></div>
<div style="position:absolute;left:301px;top:308px;width:6px;height:3px;background:rgba(120,120,120,0.2)"></div>
<div style="position:absolute;left:292px;top:218px;width:6px;height:34px;background:#3AAFA9"></div>
<div style="position:absolute;left:299px;top:237px;width:67px;height:6px;background:#fff;border:1px solid #3A1A1A"></div>
<div style="position:absolute;left:300px;top:238px;width:42px;height:4px;background:#D41414"></div>
<div style="position:absolute;left:375px;top:219px;width:1px;height:5px;background:rgba(50,50,50,0.8)"></div>
<div style="position:absolute;left:377px;top:220px;width:6px;height:3px;background:rgba(120,120,120,0.2)"></div>
<div style="position:absolute;left:375px;top:224px;width:1px;height:5px;background:rgba(50,50,50,0.8)"></div>
<div style="position:absolute;left:377px;top:225px;width:6px;height:3px;background:rgba(120,120,120,0.2)"></div>
<div style="position:absolute;left:375px;top:228px;width:1px;height:5px;background:rgba(50,50,50,0.8)"></div>
<div style="position:absolute;left:377px;top:229px;width:6px;height:3px;background:rgba(120,120,120,0.2)"></div>
<div style="position:absolute;left:375px;top:233px;width:1px;height:5px;background:rgba(50,50,50,0.8)"></div>
<div style="position:absolute;left:377px;top:234px;width:6px;height:3px;background:rgba(120,120,120,0.2)"></div>
<div style="position:absolute;left:375px;top:238px;width:1px;height:5px;background:rgba(50,50,50,0.8)"></div>
<div style="position:absolute;left:377px;top:239px;width:6px;height:3px;background:rgba(120,120,120,0.2)"></div>
<div style="position:absolute;left:375px;top:243px;width:1px;height:5px;background:rgba(50,50,50,0.8)"></div>
<div style="position:absolute;left:377px;top:244px;width:6px;height:3px;background:rgba(120,120,120,0.2)"></div>
<div style="position:absolute;left:375px;top:247px;width:1px;height:5px;background:rgba(50,50,50,0.8)"></div>
<div style="position:absolute;left:377px;top:248px;width:6px;height:3px;background:rgba(120,120,120,0.2)"></div>
<div style="position:absolute;left:375px;top:252px;width:1px;height:5px;background:rgba(50,50,50,0.8)"></div>
<div style="position:absolute;left:377px;top:253px;width:6px;height:3px;background:rgba(120,120,120,0.2)"></div>
<div style="position:absolute;left:375px;top:257px;width:1px;height:5px;background:rgba(50,50,50,0.8)"></div>
<div style="position:absolute;left:377px;top:258px;width:6px;height:3px;background:rgba(120,120,120,0.2)"></div>
<div style="position:absolute;left:375px;top:262px;width:6px;height:5px;background:#93DB93;border:1px solid #6AAE6A"></div>
<div style="position:absolute;left:377px;top:263px;width:3px;height:3px;background:rgba(70,60,60,0.16)"></div>
<div style="position:absolute;left:375px;top:266px;width:7px;height:5px;background:#93DB93;border:1px solid #6AAE6A"></div>
<div style="position:absolute;left:377px;top:267px;width:4px;height:3px;background:rgba(70,60,60,0.16)"></div>
<div style="position:absolute;left:375px;top:271px;width:8px;height:5px;background:#93DB93;border:1px solid #6AAE6A"></div>
<div style="position:absolute;left:377px;top:272px;width:5px;height:3px;background:rgba(70,60,60,0.16)"></div>
<div style="position:absolute;left:375px;top:276px;width:6px;height:5px;background:#EF8C8C;border:1px solid #C46464"></div>
<div style="position:absolute;left:377px;top:277px;width:3px;height:3px;background:rgba(70,60,60,0.16)"></div>
<div style="position:absolute;left:375px;top:281px;width:7px;height:5px;background:#EF8C8C;border:1px solid #C46464"></div>
<div style="position:absolute;left:377px;top:282px;width:4px;height:3px;background:rgba(70,60,60,0.16)"></div>
<div style="position:absolute;left:375px;top:285px;width:8px;height:5px;background:#93DB93;border:1px solid #6AAE6A"></div>
<div style="position:absolute;left:377px;top:286px;width:5px;height:3px;background:rgba(70,60,60,0.16)"></div>
<div style="position:absolute;left:375px;top:290px;width:13px;height:5px;background:#F7C2C2;border:1px solid #CF9898"></div>
<div style="position:absolute;left:377px;top:291px;width:7px;height:3px;background:rgba(70,60,60,0.16)"></div>
<div style="position:absolute;left:375px;top:295px;width:7px;height:5px;background:#EF8C8C;border:1px solid #C46464"></div>
<div style="position:absolute;left:377px;top:296px;width:4px;height:3px;background:rgba(70,60,60,0.16)"></div>
<div style="position:absolute;left:375px;top:300px;width:6px;height:5px;background:#EF8C8C;border:1px solid #C46464"></div>
<div style="position:absolute;left:377px;top:301px;width:3px;height:3px;background:rgba(70,60,60,0.16)"></div>
<div style="position:absolute;left:375px;top:304px;width:11px;height:5px;background:#F7C2C2;border:1px solid #CF9898"></div>
<div style="position:absolute;left:377px;top:305px;width:7px;height:3px;background:rgba(70,60,60,0.16)"></div>
<div style="position:absolute;left:375px;top:309px;width:14px;height:5px;background:#C9EFC9;border:1px solid #98C598"></div>
<div style="position:absolute;left:377px;top:310px;width:7px;height:3px;background:rgba(70,60,60,0.16)"></div>
<div style="position:absolute;left:375px;top:314px;width:26px;height:5px;background:#F7C2C2;border:1px solid #CF9898"></div>
<div style="position:absolute;left:377px;top:315px;width:7px;height:3px;background:rgba(70,60,60,0.16)"></div>
<div style="position:absolute;left:375px;top:319px;width:22px;height:5px;background:#F7C2C2;border:1px solid #CF9898"></div>
<div style="position:absolute;left:377px;top:320px;width:7px;height:3px;background:rgba(70,60,60,0.16)"></div>
<div style="position:absolute;left:375px;top:323px;width:17px;height:5px;background:#F7C2C2;border:1px solid #CF9898"></div>
<div style="position:absolute;left:377px;top:324px;width:7px;height:3px;background:rgba(70,60,60,0.16)"></div>
<div style="position:absolute;left:375px;top:328px;width:22px;height:5px;background:#F7C2C2;border:1px solid #CF9898"></div>
<div style="position:absolute;left:377px;top:329px;width:7px;height:3px;background:rgba(70,60,60,0.16)"></div>
<div style="position:absolute;left:375px;top:333px;width:24px;height:5px;background:#C9EFC9;border:1px solid #98C598"></div>
<div style="position:absolute;left:377px;top:334px;width:7px;height:3px;background:rgba(70,60,60,0.16)"></div>
<div style="position:absolute;left:375px;top:338px;width:26px;height:5px;background:#F7C2C2;border:1px solid #CF9898"></div>
<div style="position:absolute;left:377px;top:339px;width:7px;height:3px;background:rgba(70,60,60,0.16)"></div>
<div style="position:absolute;left:375px;top:342px;width:34px;height:5px;background:#EF8C8C;border:1px solid #C46464"></div>
<div style="position:absolute;left:377px;top:343px;width:7px;height:3px;background:rgba(70,60,60,0.16)"></div>
<div style="position:absolute;left:375px;top:347px;width:20px;height:5px;background:#F7C2C2;border:1px solid #CF9898"></div>
<div style="position:absolute;left:377px;top:348px;width:7px;height:3px;background:rgba(70,60,60,0.16)"></div>
<div style="position:absolute;left:375px;top:352px;width:24px;height:5px;background:#F7C2C2;border:1px solid #CF9898"></div>
<div style="position:absolute;left:377px;top:353px;width:7px;height:3px;background:rgba(70,60,60,0.16)"></div>
<div style="position:absolute;left:375px;top:356px;width:24px;height:5px;background:#F7C2C2;border:1px solid #CF9898"></div>
<div style="position:absolute;left:377px;top:357px;width:7px;height:3px;background:rgba(70,60,60,0.16)"></div>
<div style="position:absolute;left:375px;top:361px;width:23px;height:5px;background:#C9EFC9;border:1px solid #98C598"></div>
<div style="position:absolute;left:377px;top:362px;width:7px;height:3px;background:rgba(70,60,60,0.16)"></div>
<div style="position:absolute;left:375px;top:366px;width:19px;height:5px;background:#F7C2C2;border:1px solid #CF9898"></div>
<div style="position:absolute;left:377px;top:367px;width:7px;height:3px;background:rgba(70,60,60,0.16)"></div>
<div style="position:absolute;left:375px;top:371px;width:11px;height:5px;background:#F7C2C2;border:1px solid #CF9898"></div>
<div style="position:absolute;left:377px;top:372px;width:7px;height:3px;background:rgba(70,60,60,0.16)"></div>
<div style="position:absolute;left:375px;top:375px;width:18px;height:5px;background:#F7C2C2;border:1px solid #CF9898"></div>
<div style="position:absolute;left:377px;top:376px;width:7px;height:3px;background:rgba(70,60,60,0.16)"></div>
<div style="position:absolute;left:375px;top:380px;width:16px;height:5px;background:#F7C2C2;border:1px solid #CF9898"></div>
<div style="position:absolute;left:377px;top:381px;width:7px;height:3px;background:rgba(70,60,60,0.16)"></div>
<div style="position:absolute;left:375px;top:385px;width:30px;height:5px;background:#93DB93;border:1px solid #6AAE6A"></div>
<div style="position:absolute;left:377px;top:386px;width:7px;height:3px;background:rgba(70,60,60,0.16)"></div>
<div style="position:absolute;left:375px;top:390px;width:24px;height:5px;background:#F7C2C2;border:1px solid #CF9898"></div>
<div style="position:absolute;left:377px;top:391px;width:7px;height:3px;background:rgba(70,60,60,0.16)"></div>
<div style="position:absolute;left:375px;top:394px;width:29px;height:5px;background:#C9EFC9;border:1px solid #98C598"></div>
<div style="position:absolute;left:377px;top:395px;width:7px;height:3px;background:rgba(70,60,60,0.16)"></div>
<div style="position:absolute;left:375px;top:399px;width:33px;height:5px;background:#93DB93;border:1px solid #6AAE6A"></div>
<div style="position:absolute;left:377px;top:400px;width:7px;height:3px;background:rgba(70,60,60,0.16)"></div>
<div style="position:absolute;left:375px;top:404px;width:41px;height:5px;background:#EF8C8C;border:1px solid #C46464"></div>
<div style="position:absolute;left:377px;top:405px;width:7px;height:3px;background:rgba(70,60,60,0.16)"></div>
<div style="position:absolute;left:375px;top:409px;width:33px;height:5px;background:#EF8C8C;border:1px solid #C46464"></div>
<div style="position:absolute;left:377px;top:410px;width:7px;height:3px;background:rgba(70,60,60,0.16)"></div>
<div style="position:absolute;left:375px;top:413px;width:32px;height:5px;background:#93DB93;border:1px solid #6AAE6A"></div>
<div style="position:absolute;left:377px;top:414px;width:7px;height:3px;background:rgba(70,60,60,0.16)"></div>
<div style="position:absolute;left:375px;top:418px;width:55px;height:5px;background:#EF8C8C;border:1px solid #C46464"></div>
<div style="position:absolute;left:377px;top:419px;width:7px;height:3px;background:rgba(70,60,60,0.16)"></div>
<div style="position:absolute;left:375px;top:423px;width:55px;height:5px;background:#EF8C8C;border:1px solid #C46464"></div>
<div style="position:absolute;left:377px;top:424px;width:7px;height:3px;background:rgba(70,60,60,0.16)"></div>
<div style="position:absolute;left:375px;top:428px;width:32px;height:5px;background:#EF8C8C;border:1px solid #C46464"></div>
<div style="position:absolute;left:377px;top:429px;width:7px;height:3px;background:rgba(70,60,60,0.16)"></div>
<div style="position:absolute;left:375px;top:432px;width:32px;height:5px;background:#EF8C8C;border:1px solid #C46464"></div>
<div style="position:absolute;left:377px;top:433px;width:7px;height:3px;background:rgba(70,60,60,0.16)"></div>
<div style="position:absolute;left:375px;top:437px;width:33px;height:5px;background:#EF8C8C;border:1px solid #C46464"></div>
<div style="position:absolute;left:377px;top:438px;width:7px;height:3px;background:rgba(70,60,60,0.16)"></div>
<div style="position:absolute;left:375px;top:442px;width:20px;height:5px;background:#F7C2C2;border:1px solid #CF9898"></div>
<div style="position:absolute;left:377px;top:443px;width:7px;height:3px;background:rgba(70,60,60,0.16)"></div>
<div style="position:absolute;left:375px;top:447px;width:16px;height:5px;background:#F7C2C2;border:1px solid #CF9898"></div>
<div style="position:absolute;left:377px;top:448px;width:7px;height:3px;background:rgba(70,60,60,0.16)"></div>
<div style="position:absolute;left:375px;top:451px;width:19px;height:5px;background:#C9EFC9;border:1px solid #98C598"></div>
<div style="position:absolute;left:377px;top:452px;width:7px;height:3px;background:rgba(70,60,60,0.16)"></div>
<div style="position:absolute;left:375px;top:456px;width:26px;height:5px;background:#C9EFC9;border:1px solid #98C598"></div>
<div style="position:absolute;left:377px;top:457px;width:7px;height:3px;background:rgba(70,60,60,0.16)"></div>
<div style="position:absolute;left:375px;top:461px;width:20px;height:5px;background:#F7C2C2;border:1px solid #CF9898"></div>
<div style="position:absolute;left:377px;top:462px;width:7px;height:3px;background:rgba(70,60,60,0.16)"></div>
<div style="position:absolute;left:375px;top:465px;width:20px;height:5px;background:#F7C2C2;border:1px solid #CF9898"></div>
<div style="position:absolute;left:377px;top:466px;width:7px;height:3px;background:rgba(70,60,60,0.16)"></div>
<div style="position:absolute;left:375px;top:470px;width:5px;height:5px;background:#E3B9B9;border:1px solid rgba(110,70,70,0.6)"></div>
<div style="position:absolute;left:375px;top:475px;width:1px;height:5px;background:rgba(50,50,50,0.8)"></div>
<div style="position:absolute;left:377px;top:476px;width:6px;height:3px;background:rgba(120,120,120,0.2)"></div>
<div style="position:absolute;left:375px;top:480px;width:1px;height:5px;background:rgba(50,50,50,0.8)"></div>
<div style="position:absolute;left:377px;top:481px;width:6px;height:3px;background:rgba(120,120,120,0.2)"></div>
<div style="position:absolute;left:368.5px;top:228px;width:6px;height:233px;background:#EC5757"></div>
<div style="position:absolute;left:376px;top:422px;width:54px;height:6px;background:#C80E0E;border:1px solid #333;border-right:none"></div>
<div class="t" style="left:979px;top:684.4px;font-size:11px;line-height:13.2px;color:#EEE;letter-spacing:-0.2px">4945.50</div>
<div style="position:absolute;left:429px;top:190px;width:484px;height:667px;background:#CFEFFF;border:1px solid #6C9CBB"></div>
<div style="position:absolute;left:431px;top:192px;width:480px;height:663px;background:#EEEEF2"></div>
<div class="t" style="left:589.7px;top:195.9px;font-size:11px;line-height:13.2px;transform-origin:0 50%;transform:scaleX(0.896);font-weight:bold;color:#222">Chart settings</div>
<div style="position:absolute;left:552px;top:214px;width:118px;height:22px;background:#F5F5F8;border:1px solid #DCDCE2;border-bottom:none"></div>
<div class="t" style="left:446px;top:219.4px;font-size:11px;line-height:13.2px;transform-origin:0 50%;transform:scaleX(0.893);color:#444">Visual Settings</div>
<div class="t" style="left:563.2px;top:219.4px;font-size:11px;line-height:13.2px;transform-origin:0 50%;transform:scaleX(0.888);color:#3F8FD2">Clusters Settings</div>
<div class="t" style="left:679.8px;top:219.4px;font-size:11px;line-height:13.2px;transform-origin:0 50%;transform:scaleX(0.914);color:#444">Trading Settings</div>
<div class="t" style="left:797.8px;top:219.4px;font-size:11px;line-height:13.2px;transform-origin:0 50%;transform:scaleX(0.902);color:#444">Templates</div>
<div style="position:absolute;left:436px;top:235px;width:470px;height:573px;background:#F5F5F8;border:1px solid #E0E0E6"></div>
<div style="position:absolute;left:552px;top:234px;width:118px;height:2px;background:#F5F5F8"></div>
<div style="position:absolute;left:446px;top:245px;width:450px;height:553px;background:#EEEEF2;border:1px solid #DCDCE2"></div>
<div style="position:absolute;left:450px;top:249px;width:443px;height:18px;background:#FFFFFF;border:1px solid #E3E3E8"></div>
<div class="t" style="left:453.7px;top:252.3px;font-size:10.5px;line-height:12.6px;transform-origin:0 50%;transform:scaleX(0.890);color:#A8A8A8">Search</div>
<div style="position:absolute;left:447px;top:270px;width:434px;height:472px;background:#FFFFFF"></div>
<div style="position:absolute;left:447px;top:271px;width:434px;height:17px;background:#D5D5D9"></div>
<svg style="position:absolute;left:453px;top:275px;" width="8" height="8" viewBox="0 0 8 8"><path d="M6 2 L6 6.5 L1.5 6.5 Z" fill="#222"/></svg>
<div class="t" style="left:466px;top:274.05px;font-size:11px;line-height:13.2px;color:#222"><b>Clusters content</b></div>
<div style="position:absolute;left:447px;top:307px;width:434px;height:1px;background:#E6E6EC"></div>
<div style="position:absolute;left:663px;top:288px;width:1px;height:20px;background:#E0E0E8"></div>
<div class="t" style="left:466px;top:292.58px;font-size:11.2px;line-height:13.44px;color:#3A3A3A;letter-spacing:-0.05px">Content</div>
<div class="t" style="left:667px;top:292.58px;font-size:11.2px;line-height:13.44px;color:#3A3A3A">Volume</div>
<div style="position:absolute;left:447px;top:308px;width:217px;height:20px;background:#0A74CA"></div>
<div style="position:absolute;left:664px;top:308px;width:217px;height:20px;background:#D5E7F6"></div>
<svg style="position:absolute;left:868px;top:315px;" width="10" height="6" viewBox="0 0 10 6"><path d="M1 1 L9 1 L5 5 Z" fill="#222"/></svg>
<div style="position:absolute;left:447px;top:327px;width:434px;height:1px;background:#E6E6EC"></div>
<div style="position:absolute;left:663px;top:308px;width:1px;height:20px;background:#E0E0E8"></div>
<div class="t" style="left:466px;top:312.33px;font-size:11.2px;line-height:13.44px;color:#FFFFFF;letter-spacing:-0.05px">Mode</div>
<div class="t" style="left:667px;top:312.33px;font-size:11.2px;line-height:13.44px;color:#2A2A2A">Volume profile</div>
<div style="position:absolute;left:447px;top:346px;width:434px;height:1px;background:#E6E6EC"></div>
<div style="position:absolute;left:663px;top:328px;width:1px;height:19px;background:#E0E0E8"></div>
<div class="t" style="left:466px;top:331.68px;font-size:11.2px;line-height:13.44px;color:#3A3A3A;letter-spacing:-0.05px">Draw borders</div>
<div style="position:absolute;left:667px;top:331px;width:12px;height:12px;background:#fff;border:1px solid #D6D6DC"></div>
<svg style="position:absolute;left:667px;top:331px;" width="12" height="12" viewBox="0 0 12 12"><path d="M2.5 6.2 L5 8.6 L9.6 3.4" fill="none" stroke="#222" stroke-width="1.4"/></svg>
<div style="position:absolute;left:447px;top:347px;width:434px;height:18px;background:#D5D5D9"></div>
<svg style="position:absolute;left:453px;top:352px;" width="8" height="8" viewBox="0 0 8 8"><path d="M6 2 L6 6.5 L1.5 6.5 Z" fill="#222"/></svg>
<div class="t" style="left:466px;top:350.55px;font-size:11px;line-height:13.2px;color:#222"><b>Color scheme</b></div>
<div style="position:absolute;left:447px;top:384px;width:434px;height:1px;background:#E6E6EC"></div>
<div style="position:absolute;left:663px;top:365px;width:1px;height:20px;background:#E0E0E8"></div>
<div class="t" style="left:466px;top:369.78px;font-size:11.2px;line-height:13.44px;color:#3A3A3A;letter-spacing:-0.05px">Color scheme</div>
<div class="t" style="left:667px;top:369.78px;font-size:11.2px;line-height:13.44px;color:#3A3A3A">Bid/Ask volume proportion</div>
<div style="position:absolute;left:447px;top:401px;width:434px;height:1px;background:#E6E6EC"></div>
<div style="position:absolute;left:663px;top:385px;width:1px;height:17px;background:#E0E0E8"></div>
<div class="t" style="left:466px;top:388.43px;font-size:11.2px;line-height:13.44px;color:#3A3A3A;letter-spacing:-0.05px">Background of clusters</div>
<svg style="position:absolute;left:667px;top:389px;" width="11" height="11" viewBox="0 0 11 11"><rect x="0.5" y="0.5" width="10" height="10" fill="#fff" stroke="#ddd"/><rect x="1" y="1" width="3" height="3" fill="#ddd"/><rect x="7" y="1" width="3" height="3" fill="#ddd"/><rect x="4" y="4" width="3" height="3" fill="#ddd"/><rect x="1" y="7" width="3" height="3" fill="#ddd"/><rect x="7" y="7" width="3" height="3" fill="#ddd"/></svg>
<div class="t" style="left:681px;top:388.19px;font-size:11.1px;line-height:13.319999999999999px;color:#3A3A3A">#00FFFFFF</div>
<div style="position:absolute;left:447px;top:419px;width:434px;height:1px;background:#E6E6EC"></div>
<div style="position:absolute;left:663px;top:402px;width:1px;height:18px;background:#E0E0E8"></div>
<div class="t" style="left:466px;top:405.72999999999996px;font-size:11.2px;line-height:13.44px;color:#A5A5A5;letter-spacing:-0.05px">Main color</div>
<div style="position:absolute;left:667px;top:406px;width:11px;height:10px;background:#A3BFF0"></div>
<div class="t" style="left:681px;top:405.48999999999995px;font-size:11.1px;line-height:13.319999999999999px;color:#A5A5A5">#FF6495ED</div>
<div style="position:absolute;left:447px;top:437px;width:434px;height:1px;background:#E6E6EC"></div>
<div style="position:absolute;left:663px;top:420px;width:1px;height:18px;background:#E0E0E8"></div>
<div class="t" style="left:466px;top:423.58px;font-size:11.2px;line-height:13.44px;color:#3A3A3A;letter-spacing:-0.05px">Bid Color</div>
<div style="position:absolute;left:667px;top:424px;width:11px;height:10px;background:#EE0000"></div>
<div class="t" style="left:681px;top:423.34px;font-size:11.1px;line-height:13.319999999999999px;color:#3A3A3A">Red</div>
<div style="position:absolute;left:447px;top:455px;width:434px;height:1px;background:#E6E6EC"></div>
<div style="position:absolute;left:663px;top:438px;width:1px;height:18px;background:#E0E0E8"></div>
<div class="t" style="left:466px;top:441.58px;font-size:11.2px;line-height:13.44px;color:#3A3A3A;letter-spacing:-0.05px">Ask Color</div>
<div style="position:absolute;left:667px;top:442px;width:11px;height:10px;background:#33CC33"></div>
<div class="t" style="left:681px;top:441.34px;font-size:11.1px;line-height:13.319999999999999px;color:#3A3A3A">#FF32CD32</div>
<div style="position:absolute;left:447px;top:472px;width:434px;height:1px;background:#E6E6EC"></div>
<div style="position:absolute;left:663px;top:456px;width:1px;height:17px;background:#E0E0E8"></div>
<div class="t" style="left:466px;top:459.28px;font-size:11.2px;line-height:13.44px;color:#A5A5A5;letter-spacing:-0.05px">Heatmap</div>
<div style="position:absolute;left:667px;top:458px;width:211px;height:13px;background:linear-gradient(90deg,#A9A9AB 0%,#A7BCCB 25%,#9DCDE8 48%,#F4F7F9 70%,#FFF7A0 86%,#FDD592 100%)"></div>
<div style="position:absolute;left:447px;top:491px;width:434px;height:1px;background:#E6E6EC"></div>
<div style="position:absolute;left:663px;top:473px;width:1px;height:19px;background:#E0E0E8"></div>
<div class="t" style="left:466px;top:477.12999999999994px;font-size:11.2px;line-height:13.44px;color:#A5A5A5;letter-spacing:-0.05px">Upper cut-off, %</div>
<div style="position:absolute;left:666px;top:480px;width:214px;height:2px;background:#DDDDE2"></div>
<div style="position:absolute;left:667px;top:487px;width:1px;height:2px;background:#999"></div>
<div style="position:absolute;left:680px;top:487px;width:1px;height:2px;background:#999"></div>
<div style="position:absolute;left:693px;top:487px;width:1px;height:2px;background:#999"></div>
<div style="position:absolute;left:707px;top:487px;width:1px;height:2px;background:#999"></div>
<div style="position:absolute;left:720px;top:487px;width:1px;height:2px;background:#999"></div>
<div style="position:absolute;left:733px;top:487px;width:1px;height:2px;background:#999"></div>
<div style="position:absolute;left:746px;top:487px;width:1px;height:2px;background:#999"></div>
<div style="position:absolute;left:759px;top:487px;width:1px;height:2px;background:#999"></div>
<div style="position:absolute;left:773px;top:487px;width:1px;height:2px;background:#999"></div>
<div style="position:absolute;left:786px;top:487px;width:1px;height:2px;background:#999"></div>
<div style="position:absolute;left:799px;top:487px;width:1px;height:2px;background:#999"></div>
<div style="position:absolute;left:812px;top:487px;width:1px;height:2px;background:#999"></div>
<div style="position:absolute;left:825px;top:487px;width:1px;height:2px;background:#999"></div>
<div style="position:absolute;left:839px;top:487px;width:1px;height:2px;background:#999"></div>
<div style="position:absolute;left:852px;top:487px;width:1px;height:2px;background:#999"></div>
<div style="position:absolute;left:865px;top:487px;width:1px;height:2px;background:#999"></div>
<div style="position:absolute;left:878px;top:487px;width:1px;height:2px;background:#999"></div>
<div style="position:absolute;left:718px;top:476px;width:5px;height:10px;background:#707070"></div>
<div style="position:absolute;left:447px;top:508px;width:434px;height:1px;background:#E6E6EC"></div>
<div style="position:absolute;left:663px;top:492px;width:1px;height:17px;background:#E0E0E8"></div>
<div class="t" style="left:466px;top:495.03px;font-size:11.2px;line-height:13.44px;color:#A5A5A5;letter-spacing:-0.05px">Contrast</div>
<div style="position:absolute;left:666px;top:497px;width:214px;height:2px;background:#DDDDE2"></div>
<div style="position:absolute;left:667px;top:504px;width:1px;height:2px;background:#999"></div>
<div style="position:absolute;left:680px;top:504px;width:1px;height:2px;background:#999"></div>
<div style="position:absolute;left:693px;top:504px;width:1px;height:2px;background:#999"></div>
<div style="position:absolute;left:707px;top:504px;width:1px;height:2px;background:#999"></div>
<div style="position:absolute;left:720px;top:504px;width:1px;height:2px;background:#999"></div>
<div style="position:absolute;left:733px;top:504px;width:1px;height:2px;background:#999"></div>
<div style="position:absolute;left:746px;top:504px;width:1px;height:2px;background:#999"></div>
<div style="position:absolute;left:759px;top:504px;width:1px;height:2px;background:#999"></div>
<div style="position:absolute;left:773px;top:504px;width:1px;height:2px;background:#999"></div>
<div style="position:absolute;left:786px;top:504px;width:1px;height:2px;background:#999"></div>
<div style="position:absolute;left:799px;top:504px;width:1px;height:2px;background:#999"></div>
<div style="position:absolute;left:812px;top:504px;width:1px;height:2px;background:#999"></div>
<div style="position:absolute;left:825px;top:504px;width:1px;height:2px;background:#999"></div>
<div style="position:absolute;left:839px;top:504px;width:1px;height:2px;background:#999"></div>
<div style="position:absolute;left:852px;top:504px;width:1px;height:2px;background:#999"></div>
<div style="position:absolute;left:865px;top:504px;width:1px;height:2px;background:#999"></div>
<div style="position:absolute;left:878px;top:504px;width:1px;height:2px;background:#999"></div>
<div style="position:absolute;left:665px;top:493px;width:5px;height:10px;background:#707070"></div>
<div style="position:absolute;left:447px;top:509px;width:434px;height:19px;background:#D5D5D9"></div>
<svg style="position:absolute;left:453px;top:514px;" width="8" height="8" viewBox="0 0 8 8"><path d="M6 2 L6 6.5 L1.5 6.5 Z" fill="#222"/></svg>
<div class="t" style="left:466px;top:513.0999999999999px;font-size:11px;line-height:13.2px;color:#222"><b>Additional footptint</b></div>
<div style="position:absolute;left:447px;top:546px;width:434px;height:1px;background:#E6E6EC"></div>
<div style="position:absolute;left:663px;top:528px;width:1px;height:19px;background:#E0E0E8"></div>
<svg style="position:absolute;left:453px;top:533px;" width="6" height="8" viewBox="0 0 6 8"><path d="M1.5 1 L5 4 L1.5 7 Z" fill="#222"/></svg>
<div class="t" style="left:466px;top:531.73px;font-size:11.2px;line-height:13.44px;color:#3A3A3A;letter-spacing:-0.05px">Additional footptint</div>
<div style="position:absolute;left:665px;top:531px;width:12px;height:12px;background:#fff;border:1px solid #D6D6DC"></div>
<div style="position:absolute;left:447px;top:547px;width:434px;height:18px;background:#D5D5D9"></div>
<svg style="position:absolute;left:453px;top:552px;" width="8" height="8" viewBox="0 0 8 8"><path d="M6 2 L6 6.5 L1.5 6.5 Z" fill="#222"/></svg>
<div class="t" style="left:466px;top:550.6999999999999px;font-size:11px;line-height:13.2px;color:#222"><b>Outer border and direction indicator</b></div>
<div style="position:absolute;left:447px;top:583px;width:434px;height:1px;background:#E6E6EC"></div>
<div style="position:absolute;left:663px;top:565px;width:1px;height:19px;background:#E0E0E8"></div>
<div class="t" style="left:466px;top:569.0799999999999px;font-size:11.2px;line-height:13.44px;color:#3A3A3A;letter-spacing:-0.05px">Border Type</div>
<div class="t" style="left:667px;top:569.0799999999999px;font-size:11.2px;line-height:13.44px;color:#3A3A3A">None</div>
<div style="position:absolute;left:447px;top:602px;width:434px;height:1px;background:#E6E6EC"></div>
<div style="position:absolute;left:663px;top:584px;width:1px;height:19px;background:#E0E0E8"></div>
<div class="t" style="left:466px;top:588.0799999999999px;font-size:11.2px;line-height:13.44px;color:#A5A5A5;letter-spacing:-0.05px">Border color by direction</div>
<div style="position:absolute;left:665px;top:588px;width:12px;height:12px;background:#fff;border:1px solid #E6E6EA"></div>
<div style="position:absolute;left:447px;top:620px;width:434px;height:1px;background:#E6E6EC"></div>
<div style="position:absolute;left:663px;top:603px;width:1px;height:18px;background:#E0E0E8"></div>
<svg style="position:absolute;left:453px;top:608px;" width="6" height="8" viewBox="0 0 6 8"><path d="M1.5 1 L5 4 L1.5 7 Z" fill="#222"/></svg>
<div class="t" style="left:466px;top:606.9299999999998px;font-size:11.2px;line-height:13.44px;color:#A5A5A5;letter-spacing:-0.05px">Border</div>
<div style="position:absolute;left:665px;top:606px;width:21px;height:12px;background:#fff;border:1px solid #E0E0E6"></div>
<div style="position:absolute;left:668px;top:612px;width:15px;height:2px;background:#888"></div>
<div class="t" style="left:689px;top:606.81px;font-size:10.9px;line-height:13.08px;color:#A5A5A5">Solid; 1px</div>
<div style="position:absolute;left:447px;top:639px;width:434px;height:1px;background:#E6E6EC"></div>
<div style="position:absolute;left:663px;top:621px;width:1px;height:19px;background:#E0E0E8"></div>
<div class="t" style="left:466px;top:625.53px;font-size:11.2px;line-height:13.44px;color:#3A3A3A;letter-spacing:-0.05px">Direction indicator width</div>
<div style="position:absolute;left:667px;top:625px;width:12px;height:12px;background:#fff;border:1px solid #D6D6DC"></div>
<svg style="position:absolute;left:667px;top:625px;" width="12" height="12" viewBox="0 0 12 12"><path d="M2.5 6.2 L5 8.6 L9.6 3.4" fill="none" stroke="#222" stroke-width="1.4"/></svg>
<div style="position:absolute;left:684px;top:629.5px;width:196px;height:2px;background:#DDDDE2"></div>
<div style="position:absolute;left:685px;top:636px;width:1px;height:2px;background:#777"></div>
<div style="position:absolute;left:718px;top:636px;width:1px;height:2px;background:#777"></div>
<div style="position:absolute;left:750px;top:636px;width:1px;height:2px;background:#777"></div>
<div style="position:absolute;left:782px;top:636px;width:1px;height:2px;background:#777"></div>
<div style="position:absolute;left:815px;top:636px;width:1px;height:2px;background:#777"></div>
<div style="position:absolute;left:848px;top:636px;width:1px;height:2px;background:#777"></div>
<div style="position:absolute;left:683px;top:625px;width:4px;height:10px;background:#222"></div>
<div style="position:absolute;left:447px;top:640px;width:434px;height:18px;background:#D5D5D9"></div>
<svg style="position:absolute;left:453px;top:645px;" width="8" height="8" viewBox="0 0 8 8"><path d="M6 2 L6 6.5 L1.5 6.5 Z" fill="#222"/></svg>
<div class="t" style="left:466px;top:643.9499999999999px;font-size:11px;line-height:13.2px;color:#222"><b>Text</b></div>
<div style="position:absolute;left:447px;top:677px;width:434px;height:1px;background:#E6E6EC"></div>
<div style="position:absolute;left:663px;top:658px;width:1px;height:20px;background:#E0E0E8"></div>
<div class="t" style="left:466px;top:662.5799999999999px;font-size:11.2px;line-height:13.44px;color:#3A3A3A;letter-spacing:-0.05px">Show Text</div>
<div style="position:absolute;left:667px;top:662px;width:12px;height:12px;background:#fff;border:1px solid #D6D6DC"></div>
<svg style="position:absolute;left:667px;top:662px;" width="12" height="12" viewBox="0 0 12 12"><path d="M2.5 6.2 L5 8.6 L9.6 3.4" fill="none" stroke="#222" stroke-width="1.4"/></svg>
<div style="position:absolute;left:447px;top:695px;width:434px;height:1px;background:#E6E6EC"></div>
<div style="position:absolute;left:663px;top:678px;width:1px;height:18px;background:#E0E0E8"></div>
<div class="t" style="left:466px;top:681.7299999999999px;font-size:11.2px;line-height:13.44px;color:#3A3A3A;letter-spacing:-0.05px">Text Color</div>
<div style="position:absolute;left:667px;top:682px;width:11px;height:10px;background:#000000"></div>
<div class="t" style="left:681px;top:681.49px;font-size:11.1px;line-height:13.319999999999999px;color:#3A3A3A">Black</div>
<div style="position:absolute;left:447px;top:714px;width:434px;height:1px;background:#E6E6EC"></div>
<div style="position:absolute;left:663px;top:696px;width:1px;height:19px;background:#E0E0E8"></div>
<div class="t" style="left:466px;top:700.0799999999999px;font-size:11.2px;line-height:13.44px;color:#3A3A3A;letter-spacing:-0.05px">Auto Size</div>
<div style="position:absolute;left:667px;top:700px;width:12px;height:12px;background:#fff;border:1px solid #D6D6DC"></div>
<svg style="position:absolute;left:667px;top:700px;" width="12" height="12" viewBox="0 0 12 12"><path d="M2.5 6.2 L5 8.6 L9.6 3.4" fill="none" stroke="#222" stroke-width="1.4"/></svg>
<div style="position:absolute;left:447px;top:734px;width:434px;height:1px;background:#E6E6EC"></div>
<div style="position:absolute;left:663px;top:715px;width:1px;height:20px;background:#E0E0E8"></div>
<div class="t" style="left:466px;top:719.53px;font-size:11.2px;line-height:13.44px;color:#A5A5A5;letter-spacing:-0.05px">Font Size</div>
<div class="t" style="left:667px;top:719.53px;font-size:11.2px;line-height:13.44px;color:#A5A5A5">9</div>
<div style="position:absolute;left:447px;top:741px;width:434px;height:1px;background:#E6E6EC"></div>
<div style="position:absolute;left:663px;top:735px;width:1px;height:7px;background:#E0E0E8"></div>
<div style="position:absolute;left:881px;top:270px;width:14px;height:472px;background:#F2F2F5"></div>
<svg style="position:absolute;left:884px;top:274px;" width="9" height="6" viewBox="0 0 9 6"><path d="M0.5 5 L8.5 5 L4.5 1 Z" fill="#222"/></svg>
<div style="position:absolute;left:884px;top:285px;width:9px;height:214px;background:#C9C9D3"></div>
<svg style="position:absolute;left:884px;top:732px;" width="9" height="6" viewBox="0 0 9 6"><path d="M0.5 1 L8.5 1 L4.5 5 Z" fill="#222"/></svg>
<div style="position:absolute;left:446px;top:742px;width:450px;height:56px;background:#EDEDF1;border:1px solid #DCDCE2"></div>
<div class="t" style="left:457px;top:751.98px;font-size:14.2px;line-height:17.04px;color:#333">Mode</div>
<div style="position:absolute;left:830px;top:819px;width:63px;height:22px;background:#F7F7F9;border:1px solid #D8D8DE;border-radius:3px"></div>
<div class="t" style="left:831.7px;top:823.52px;width:60px;text-align:center;font-size:10.8px;line-height:12.96px;color:#333">Close</div>
<div style="position:absolute;left:456px;top:286.5px;width:425px;height:42.5px;border:2px solid #C9343B;border-radius:4px"></div>
<div style="position:absolute;left:456px;top:364px;width:425px;height:22px;border:2px solid #C9343B;border-radius:4px"></div>
<svg style="position:absolute;left:433.6px;top:194px;" width="17" height="17" viewBox="0 0 17 17"><g transform="scale(1.2142857142857142)"><path d="M3.4 0.9 L10.6 0.9 L13.3 7 L10.6 13.1 L3.4 13.1 L0.7 7 Z" fill="#fff" stroke="#1a1a1a" stroke-width="1.5" stroke-linejoin="round"/><path d="M0.8 7 L2.0 3.7 L6.2 3.7 L3.6 8.6 L1.4 8.6 Z" fill="#1a1a1a"/><path d="M7.4 8.7 L9.1 5.6 L10.9 8.7 Z" fill="#1a1a1a"/></g></svg>
<svg style="position:absolute;left:805px;top:198px;" width="11" height="8" viewBox="0 0 11 8"><path d="M0 4 L4 4" stroke="#333" stroke-width="1"/><path d="M4 2.8 L10 2.8 L10 5.2 L4 5.2 Z" fill="#222"/><rect x="5" y="1" width="1.6" height="6" fill="#222"/></svg>
<div style="position:absolute;left:836px;top:200.5px;width:8.5px;height:2.5px;background:#222"></div>
<svg style="position:absolute;left:864px;top:197px;" width="10" height="10" viewBox="0 0 10 10"><rect x="0.9" y="0.9" width="8.2" height="8.2" fill="none" stroke="#333" stroke-width="1.2"/><rect x="0.9" y="0.9" width="8.2" height="2" fill="#333"/></svg>
<svg style="position:absolute;left:893px;top:198px;" width="9" height="8" viewBox="0 0 9 8"><path d="M0.8 0.5 L8.2 7.5 M8.2 0.5 L0.8 7.5" stroke="#333" stroke-width="1.3"/></svg>
<svg style="position:absolute;left:0px;top:0px;pointer-events:none" width="1030" height="919" viewBox="0 0 1030 919"><path d="M94.8 121.2 L53.5 71.5" stroke="#C8262B" stroke-width="2.2"/><path d="M49.1 67.1 L57.8 72.2 L52.4 76.6 Z" fill="#E01818"/><path d="M681 181.8 L651.5 221.5" stroke="#C8262B" stroke-width="2.2"/><path d="M648.1 226.4 L649.6 216.8 L656.2 221.6 Z" fill="#E01818"/><circle cx="104.9" cy="133.7" r="14" fill="#F00000" stroke="#C01010" stroke-width="0.8"/><circle cx="693" cy="170.4" r="14" fill="#F00000" stroke="#C01010" stroke-width="0.8"/></svg>
<svg style="position:absolute;left:98px;top:124px;" width="12" height="19" viewBox="0 0 12 19"><path d="M6.3 2.3 L9.3 2.3 L9.3 17.3 L6.3 17.3 L6.3 6.2 L2.7 8.4 L2.7 5.4 Z" fill="#fff"/></svg>
<div class="t" style="left:677.5px;top:158.10000000000002px;width:30px;text-align:center;font-size:22px;line-height:26.4px;color:#fff;transform:scaleX(0.9)"><b>2</b></div>
</body></html>
